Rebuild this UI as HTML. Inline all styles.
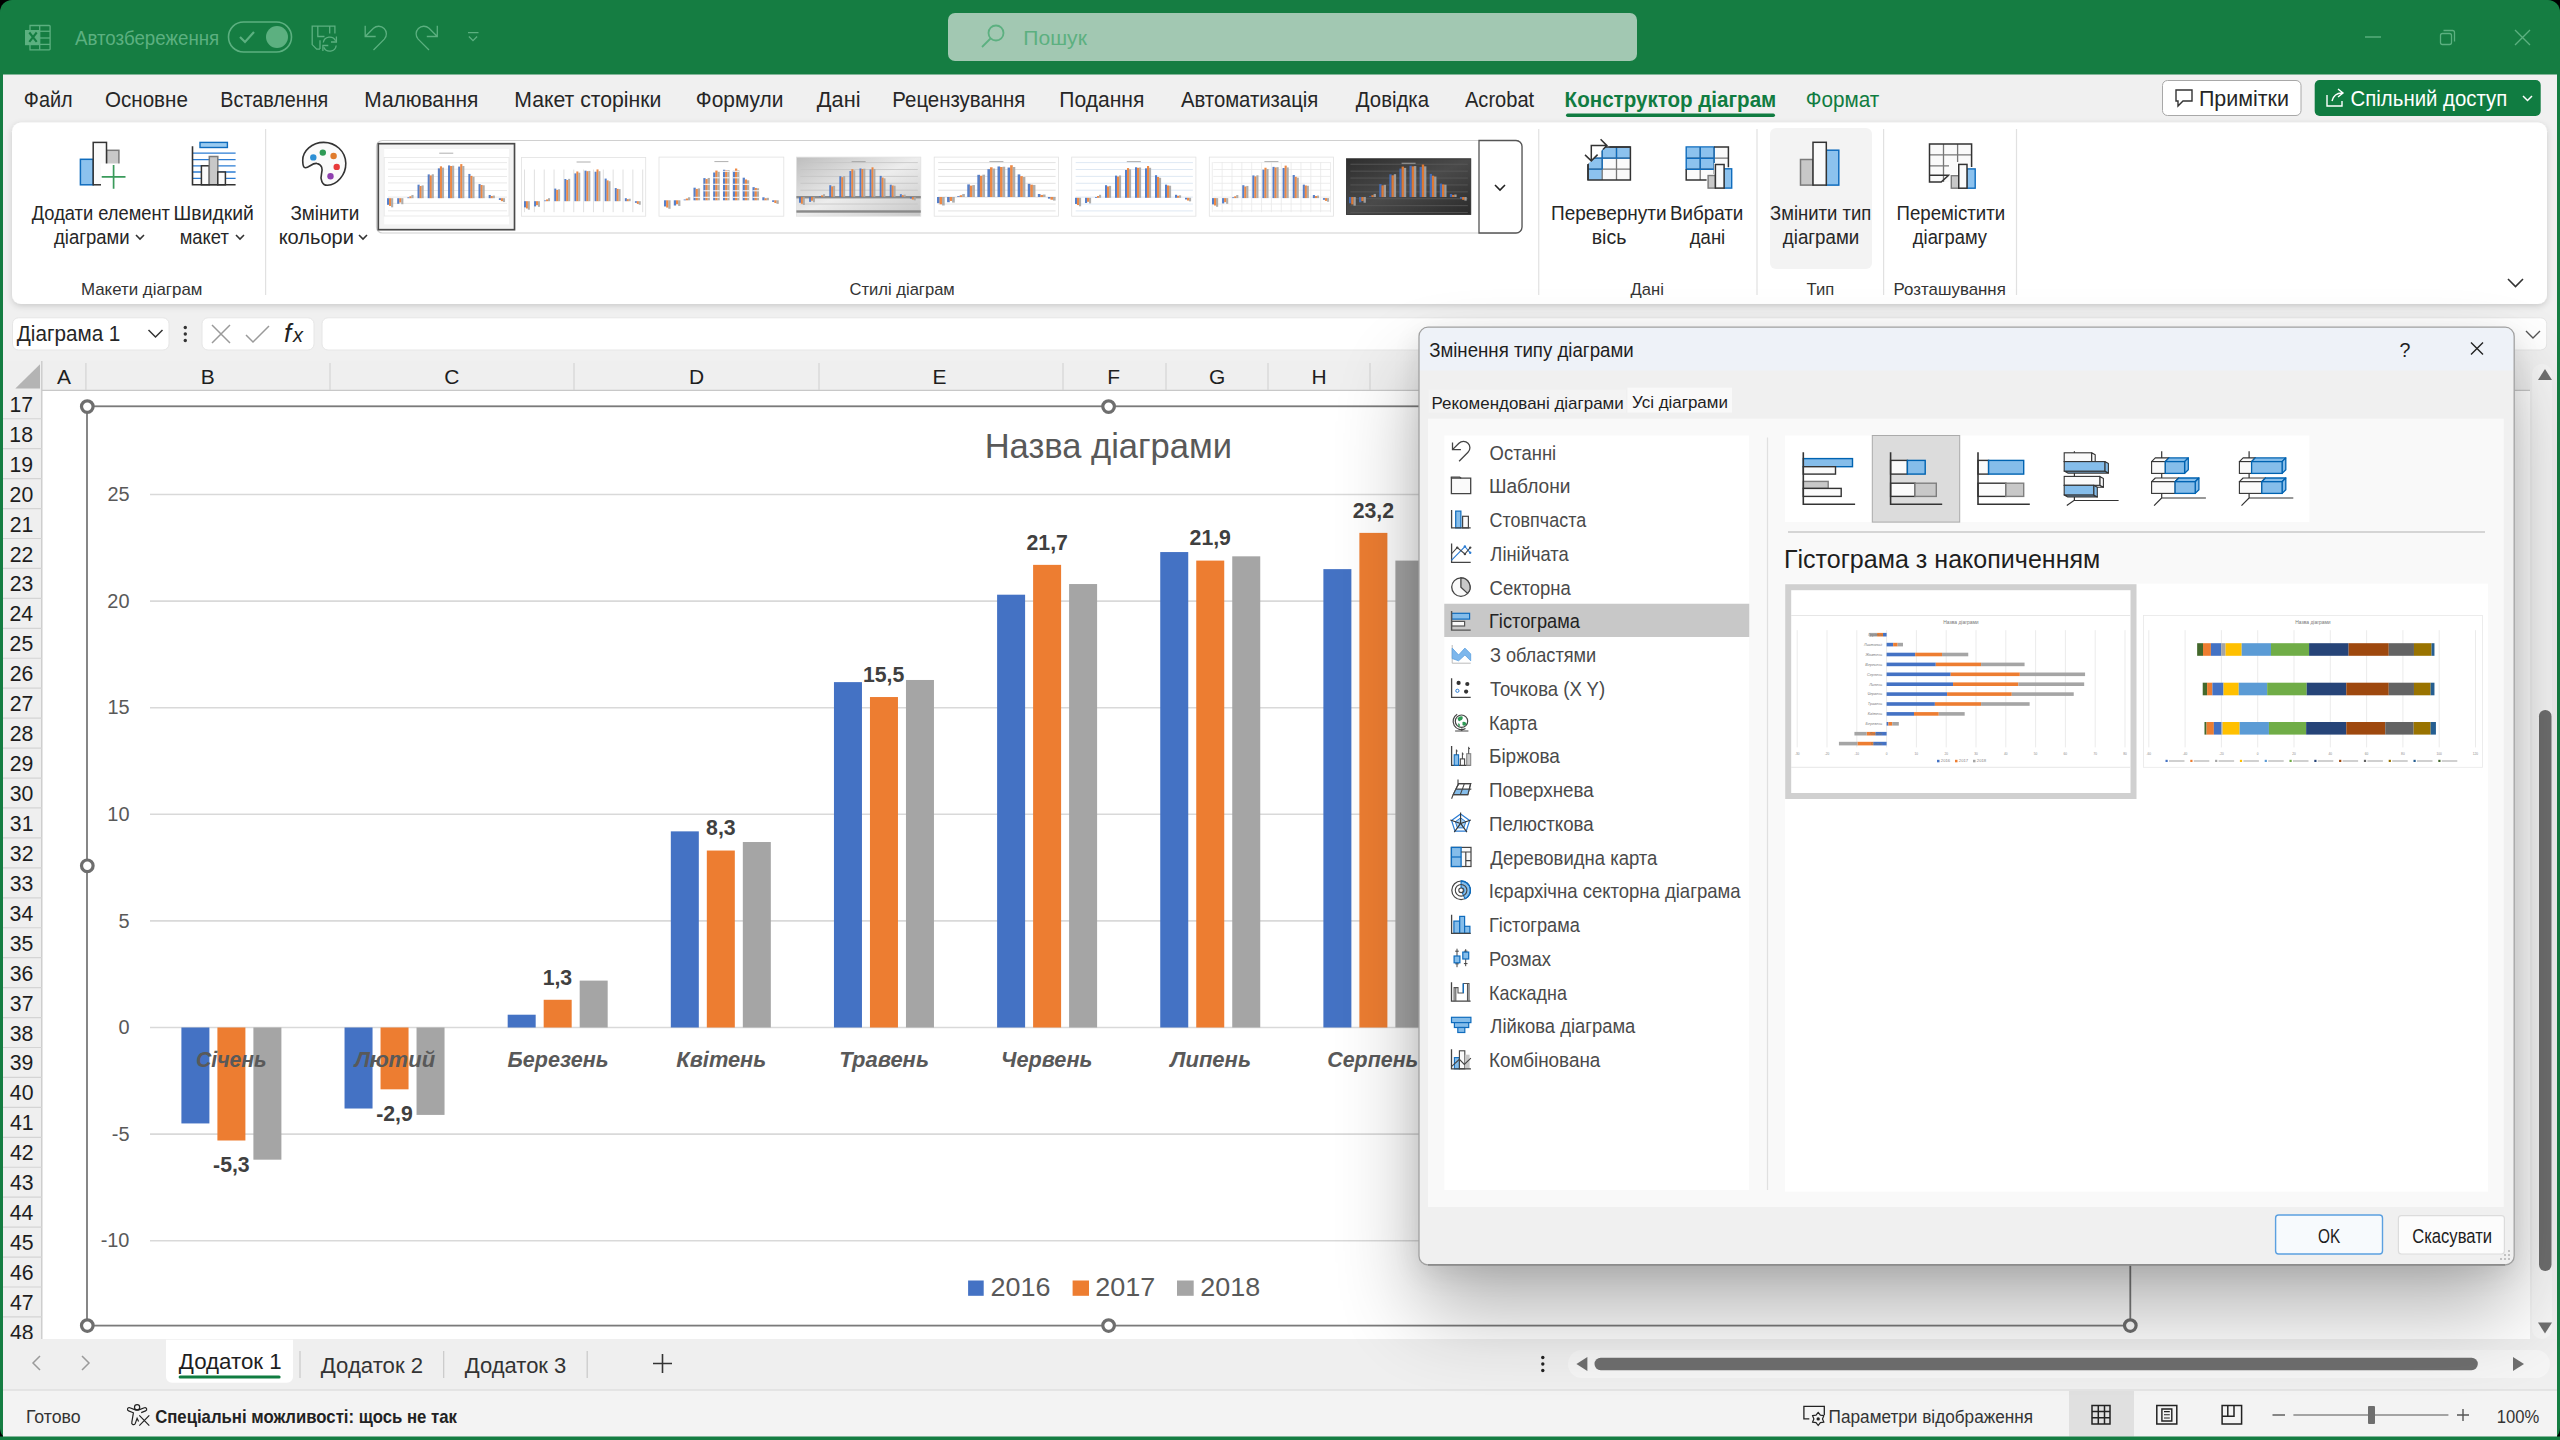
<!DOCTYPE html>
<html><head><meta charset="utf-8"><title>Excel</title><style>html,body{margin:0;padding:0;background:#000;overflow:hidden}svg{display:block}text{font-family:"Liberation Sans",sans-serif}</style></head><body><svg width="2560" height="1440" viewBox="0 0 2560 1440" font-family='"Liberation Sans", sans-serif'>
<defs>
<filter id="rshadow" x="-5%" y="-20%" width="110%" height="150%"><feDropShadow dx="0" dy="2" stdDeviation="3" flood-color="#000" flood-opacity="0.16"/></filter>
<filter id="dshadow" x="-20%" y="-20%" width="140%" height="150%"><feGaussianBlur in="SourceAlpha" stdDeviation="14" result="b1"/><feOffset in="b1" dy="8" result="o1"/><feGaussianBlur in="SourceAlpha" stdDeviation="42" result="b2"/><feOffset in="b2" dy="46" result="o2"/><feComponentTransfer in="o1" result="s1"><feFuncA type="linear" slope="0.10"/></feComponentTransfer><feComponentTransfer in="o2" result="s2"><feFuncA type="linear" slope="0.30"/></feComponentTransfer><feMerge><feMergeNode in="s2"/><feMergeNode in="s1"/><feMergeNode in="SourceGraphic"/></feMerge></filter>
<linearGradient id="g4" x1="0" y1="0" x2="1" y2="1"><stop offset="0" stop-color="#BDBDBD"/><stop offset="0.5" stop-color="#EDEDED"/><stop offset="1" stop-color="#C8C8C8"/></linearGradient>
<linearGradient id="g8" x1="0" y1="0" x2="1" y2="1"><stop offset="0" stop-color="#2E2E2E"/><stop offset="0.5" stop-color="#4A4A4A"/><stop offset="1" stop-color="#2A2A2A"/></linearGradient>
</defs>
<rect x="0.00" y="0.00" width="2560.00" height="1440.00" fill="#000" />
<rect x="0.00" y="0.00" width="2560.00" height="1440.00" fill="#157D42" rx="12" />
<path d="M30 25.5 h19.3 a0.8 0.8 0 0 1 0.8 0.8 v22.7 a0.8 0.8 0 0 1 -0.8 0.8 h-19.3 z" fill="none" stroke="#5CB080" stroke-width="1.3" />
<line x1="39.70" y1="31.25" x2="50.00" y2="31.25" stroke="#5CB080" stroke-width="1.3" />
<line x1="39.70" y1="38.00" x2="50.00" y2="38.00" stroke="#5CB080" stroke-width="1.3" />
<line x1="39.70" y1="44.40" x2="50.00" y2="44.40" stroke="#5CB080" stroke-width="1.3" />
<line x1="39.70" y1="25.50" x2="39.70" y2="49.80" stroke="#5CB080" stroke-width="1.3" />
<rect x="25.00" y="30.00" width="14.70" height="15.20" fill="#5CB080" />
<path d="M29.3 32.5 l7.4 9.4 M36.7 32.5 l-7.4 9.4" fill="none" stroke="#157D42" stroke-width="2.1" />
<text transform="translate(74.95,44.50) scale(0.9682,1)" font-size="19.35" fill="#5CB080" >Автозбереження</text>
<rect x="228.50" y="22.00" width="63.00" height="30.00" fill="none" rx="15" stroke="#5CB080" stroke-width="1.6" />
<path d="M240 37 l5 5 l9 -10" fill="none" stroke="#5CB080" stroke-width="2.2" />
<circle cx="277.00" cy="37.00" r="11.00" fill="#5CB080"/>
<path d="M320 49.1 h-3.3 l-4.5 -4.5 V26.1 H334.9 V33.6" fill="none" stroke="#5CB080" stroke-width="1.3" />
<path d="M317.8 26.1 V36.5 H324.5 M329.7 26.1 V33.6 M320 49.1 V40.2" fill="none" stroke="#5CB080" stroke-width="1.3" />
<path d="M323.3 42.5 A6.5 6.5 0 0 1 335.6 40.8 M336.2 45.5 A6.5 6.5 0 0 1 323.8 47.3" fill="none" stroke="#5CB080" stroke-width="1.3" />
<path d="M336.4 36.5 V42 H331" fill="none" stroke="#5CB080" stroke-width="1.3" />
<path d="M322.9 51 V45.5 H328.3" fill="none" stroke="#5CB080" stroke-width="1.3" />
<path d="M365.2 25.8 V36.5 H375.7 M365.2 36.5 L373.46 28.26 A7.7 7.7 0 0 1 384.34 39.14 L373.5 50" fill="none" stroke="#5CB080" stroke-width="1.3" />
<path d="M437.3 25.8 V36.5 H426.8 M437.3 36.5 L429.04 28.26 A7.7 7.7 0 0 0 418.16 39.14 L429 50" fill="none" stroke="#5CB080" stroke-width="1.3" />
<path d="M468 32.7 h10.5 M468.9 36.5 l4.1 4.1 l4.1 -4.1" fill="none" stroke="#5CB080" stroke-width="1.3" />
<rect x="948.00" y="13.00" width="689.00" height="48.00" fill="#A2C8B2" rx="7" />
<circle cx="996.00" cy="33.00" r="7.50" fill="none" stroke="#5CB080" stroke-width="1.8"/>
<line x1="990.50" y1="38.50" x2="982.00" y2="47.00" stroke="#5CB080" stroke-width="1.8" />
<text transform="translate(1023.31,45.00) scale(1.0356,1)" font-size="20.36" fill="#5CB080" >Пошук</text>
<line x1="2365.00" y1="37.00" x2="2381.00" y2="37.00" stroke="#5CB080" stroke-width="1.4" />
<rect x="2440.50" y="33.50" width="11.00" height="11.00" fill="none" rx="2" stroke="#5CB080" stroke-width="1.3" />
<path d="M2443.5 30.5 h9 a2 2 0 0 1 2 2 v9" fill="none" stroke="#5CB080" stroke-width="1.3" />
<path d="M2515 30 l15 15 M2530 30 l-15 15" fill="none" stroke="#5CB080" stroke-width="1.4" />
<rect x="3.00" y="74.50" width="2554.00" height="1362.50" fill="#F0F0F0" />
<text transform="translate(23.86,107.10) scale(0.9221,1)" font-size="21.53" fill="#262626" >Файл</text>
<text transform="translate(105.02,107.10) scale(0.9562,1)" font-size="21.53" fill="#262626" >Основне</text>
<text transform="translate(220.37,107.10) scale(0.9181,1)" font-size="21.53" fill="#262626" >Вставлення</text>
<text transform="translate(364.27,107.10) scale(0.9720,1)" font-size="21.53" fill="#262626" >Малювання</text>
<text transform="translate(514.25,107.10) scale(0.9855,1)" font-size="21.53" fill="#262626" >Макет сторінки</text>
<text transform="translate(695.80,107.10) scale(0.9713,1)" font-size="21.53" fill="#262626" >Формули</text>
<text transform="translate(816.84,107.10) scale(1.0096,1)" font-size="21.53" fill="#262626" >Дані</text>
<text transform="translate(892.32,107.10) scale(0.9484,1)" font-size="21.53" fill="#262626" >Рецензування</text>
<text transform="translate(1059.31,107.10) scale(0.9792,1)" font-size="21.53" fill="#262626" >Подання</text>
<text transform="translate(1180.95,107.10) scale(0.9433,1)" font-size="21.53" fill="#262626" >Автоматизація</text>
<text transform="translate(1355.85,107.10) scale(0.9446,1)" font-size="21.53" fill="#262626" >Довідка</text>
<text transform="translate(1464.95,107.10) scale(0.9331,1)" font-size="21.53" fill="#262626" >Acrobat</text>
<text transform="translate(1564.61,107.10) scale(0.9558,1)" font-size="21.53" font-weight="bold" fill="#107C41" >Конструктор діаграм</text>
<rect x="1566.00" y="113.50" width="209.00" height="3.50" fill="#107C41" rx="1.7" />
<text transform="translate(1805.81,107.10) scale(0.9618,1)" font-size="21.53" fill="#107C41" >Формат</text>
<rect x="2162.50" y="80.50" width="138.50" height="35.00" fill="#FFFFFF" rx="5" stroke="#A8A8A8" stroke-width="1" />
<path d="M2176 90 h16 v11 h-9 l-5 5 v-5 h-2 z" fill="none" stroke="#333" stroke-width="1.4" />
<text transform="translate(2198.88,106.25) scale(0.9840,1)" font-size="21.82" fill="#262626" >Примітки</text>
<rect x="2314.70" y="80.00" width="226.00" height="36.00" fill="#107C41" rx="5" />
<path d="M2327 95 v11 h15 v-5 M2332 101 q2 -8 10 -8 M2338 89 l5 4 l-5 4" fill="none" stroke="#fff" stroke-width="1.4" />
<text transform="translate(2350.58,106.25) scale(0.9348,1)" font-size="21.82" fill="#FFFFFF" >Спільний доступ</text>
<path d="M2523 96 l4.5 4.5 l4.5 -4.5" fill="none" stroke="#fff" stroke-width="1.5" />
<g filter="url(#rshadow)">
<rect x="12.00" y="122.50" width="2535.00" height="181.50" fill="#FFFFFF" rx="9" />
</g>
<rect x="80.40" y="159.30" width="12.80" height="25.50" fill="#8CC2EE" stroke="#0F6CBD" stroke-width="1.5" />
<rect x="106.50" y="150.30" width="12.40" height="34.50" fill="#C8C8C8" stroke="#7A7A7A" stroke-width="1.5" />
<rect x="93.20" y="142.40" width="13.30" height="42.40" fill="#FAFAFA" stroke="#333333" stroke-width="1.5" />
<rect x="101.00" y="163.50" width="25.50" height="26.50" fill="#FFFFFF" />
<path d="M113.6 165 V188.8 M101.7 176.9 H125.5" fill="none" stroke="#3A9A5B" stroke-width="1.7" />
<text transform="translate(31.76,219.60) scale(0.9326,1)" font-size="19.64" fill="#262626" >Додати елемент</text>
<text transform="translate(54.02,244.20) scale(0.9416,1)" font-size="19.64" fill="#262626" >діаграми</text>
<path d="M136 235 l4 4 l4 -4" fill="none" stroke="#333" stroke-width="1.6" />
<rect x="200.00" y="142.40" width="27.40" height="5.10" fill="#9ACBF0" stroke="#0F6CBD" stroke-width="1.4" />
<line x1="192.50" y1="153.10" x2="235.60" y2="153.10" stroke="#2B7CD3" stroke-width="1.3" />
<line x1="192.50" y1="159.60" x2="235.60" y2="159.60" stroke="#2B7CD3" stroke-width="1.3" />
<line x1="192.50" y1="165.80" x2="235.60" y2="165.80" stroke="#2B7CD3" stroke-width="1.3" />
<line x1="192.50" y1="172.00" x2="235.60" y2="172.00" stroke="#2B7CD3" stroke-width="1.3" />
<line x1="192.50" y1="178.30" x2="235.60" y2="178.30" stroke="#2B7CD3" stroke-width="1.3" />
<rect x="201.40" y="165.80" width="7.90" height="19.00" fill="#FAFAFA" stroke="#333333" stroke-width="1.5" />
<rect x="209.30" y="156.50" width="8.50" height="28.30" fill="#C8C8C8" stroke="#7A7A7A" stroke-width="1.5" />
<rect x="217.80" y="172.00" width="7.60" height="12.80" fill="#FAFAFA" stroke="#333333" stroke-width="1.5" />
<path d="M192.5 146.3 V184.8 H235.6" fill="none" stroke="#333333" stroke-width="1.6" />
<text transform="translate(173.60,219.60) scale(0.9860,1)" font-size="19.64" fill="#262626" >Швидкий</text>
<text transform="translate(179.71,244.20) scale(0.9377,1)" font-size="19.64" fill="#262626" >макет</text>
<path d="M236 235 l4 4 l4 -4" fill="none" stroke="#333" stroke-width="1.6" />
<line x1="265.60" y1="129.00" x2="265.60" y2="295.00" stroke="#E1E1E1" stroke-width="1.2" />
<path d="M305.6 167.8 C309 167.5 313 162.5 317 163.5 C322 164.5 323 169 321.5 174 C320 179 322 185.5 327.5 185.3 C337 185 346 175 345.8 163.3 C345.5 151 335.5 142.4 323.7 142.4 C312 142.4 302.5 151 302.7 160.5 C302.8 165 303.5 168 305.6 167.8 Z" fill="#FAFAFA" stroke="#333" stroke-width="1.6" />
<circle cx="313.30" cy="157.40" r="3.20" fill="#2D8FD5"/>
<circle cx="322.80" cy="152.60" r="3.20" fill="#2E9A55"/>
<circle cx="333.60" cy="156.00" r="3.20" fill="#E07B2C"/>
<circle cx="336.70" cy="166.90" r="3.20" fill="#E83A3A"/>
<circle cx="330.50" cy="176.30" r="3.20" fill="#8E3FAF"/>
<text transform="translate(290.38,219.60) scale(0.9639,1)" font-size="19.64" fill="#262626" >Змінити</text>
<text transform="translate(278.65,244.20) scale(1.0192,1)" font-size="19.64" fill="#262626" >кольори</text>
<path d="M359 235 l4 4 l4 -4" fill="none" stroke="#333" stroke-width="1.6" />
<text transform="translate(80.90,294.80) scale(1.0199,1)" font-size="16.58" fill="#333" >Макети діаграм</text>
<rect x="376.50" y="140.50" width="1145.50" height="92.50" fill="#FFFFFF" rx="6" stroke="#D0D0D0" stroke-width="1.2" />
<path d="M1479 140.5 h37 a6 6 0 0 1 6 6 v80.5 a6 6 0 0 1 -6 6 h-37 z" fill="#FFFFFF" stroke="#555" stroke-width="1.3" />
<path d="M1495 185 l5 5 l5 -5" fill="none" stroke="#222" stroke-width="1.6" />
<rect x="379.30" y="144.50" width="134.00" height="85.00" fill="#F4F4F4" />
<rect x="384.20" y="149.00" width="124.80" height="75.40" fill="#FFFFFF" />
<rect x="384.20" y="157.50" width="124.80" height="58.50" fill="none" stroke="#E6E6E6" stroke-width="0.8" />
<line x1="388.00" y1="162.60" x2="507.00" y2="162.60" stroke="#E4E4E4" stroke-width="0.8" />
<line x1="388.00" y1="169.20" x2="507.00" y2="169.20" stroke="#E4E4E4" stroke-width="0.8" />
<line x1="388.00" y1="176.50" x2="507.00" y2="176.50" stroke="#E4E4E4" stroke-width="0.8" />
<line x1="388.00" y1="182.90" x2="507.00" y2="182.90" stroke="#E4E4E4" stroke-width="0.8" />
<line x1="388.00" y1="190.50" x2="507.00" y2="190.50" stroke="#E4E4E4" stroke-width="0.8" />
<line x1="388.00" y1="197.10" x2="507.00" y2="197.10" stroke="#E4E4E4" stroke-width="0.8" />
<line x1="388.00" y1="203.40" x2="507.00" y2="203.40" stroke="#E4E4E4" stroke-width="0.8" />
<line x1="388.00" y1="210.80" x2="507.00" y2="210.80" stroke="#E4E4E4" stroke-width="0.8" />
<rect x="387.02" y="198.20" width="2.13" height="6.62" fill="#4472C4" opacity="0.9"/>
<rect x="389.05" y="198.20" width="2.13" height="7.79" fill="#ED7D31" opacity="0.9"/>
<rect x="391.08" y="198.20" width="2.13" height="9.11" fill="#A5A5A5" opacity="0.9"/>
<rect x="397.18" y="198.20" width="2.13" height="5.59" fill="#4472C4" opacity="0.9"/>
<rect x="399.22" y="198.20" width="2.13" height="4.26" fill="#ED7D31" opacity="0.9"/>
<rect x="401.25" y="198.20" width="2.13" height="6.03" fill="#A5A5A5" opacity="0.9"/>
<rect x="407.35" y="197.32" width="2.13" height="0.88" fill="#4472C4" opacity="0.9"/>
<rect x="409.38" y="196.29" width="2.13" height="1.91" fill="#ED7D31" opacity="0.9"/>
<rect x="411.42" y="194.97" width="2.13" height="3.23" fill="#A5A5A5" opacity="0.9"/>
<rect x="417.52" y="184.68" width="2.13" height="13.52" fill="#4472C4" opacity="0.9"/>
<rect x="419.55" y="186.00" width="2.13" height="12.20" fill="#ED7D31" opacity="0.9"/>
<rect x="421.58" y="185.41" width="2.13" height="12.79" fill="#A5A5A5" opacity="0.9"/>
<rect x="427.68" y="174.39" width="2.13" height="23.81" fill="#4472C4" opacity="0.9"/>
<rect x="429.72" y="175.41" width="2.13" height="22.79" fill="#ED7D31" opacity="0.9"/>
<rect x="431.75" y="174.24" width="2.13" height="23.96" fill="#A5A5A5" opacity="0.9"/>
<rect x="437.85" y="168.36" width="2.13" height="29.84" fill="#4472C4" opacity="0.9"/>
<rect x="439.88" y="166.30" width="2.13" height="31.90" fill="#ED7D31" opacity="0.9"/>
<rect x="441.92" y="167.62" width="2.13" height="30.58" fill="#A5A5A5" opacity="0.9"/>
<rect x="448.02" y="165.42" width="2.13" height="32.78" fill="#4472C4" opacity="0.9"/>
<rect x="450.05" y="166.01" width="2.13" height="32.19" fill="#ED7D31" opacity="0.9"/>
<rect x="452.08" y="165.71" width="2.13" height="32.49" fill="#A5A5A5" opacity="0.9"/>
<rect x="458.18" y="166.59" width="2.13" height="31.61" fill="#4472C4" opacity="0.9"/>
<rect x="460.22" y="164.10" width="2.13" height="34.10" fill="#ED7D31" opacity="0.9"/>
<rect x="462.25" y="166.01" width="2.13" height="32.19" fill="#A5A5A5" opacity="0.9"/>
<rect x="468.35" y="173.94" width="2.13" height="24.25" fill="#4472C4" opacity="0.9"/>
<rect x="470.38" y="175.86" width="2.13" height="22.34" fill="#ED7D31" opacity="0.9"/>
<rect x="472.42" y="176.74" width="2.13" height="21.46" fill="#A5A5A5" opacity="0.9"/>
<rect x="478.52" y="184.09" width="2.13" height="14.11" fill="#4472C4" opacity="0.9"/>
<rect x="480.55" y="184.97" width="2.13" height="13.23" fill="#ED7D31" opacity="0.9"/>
<rect x="482.58" y="185.26" width="2.13" height="12.94" fill="#A5A5A5" opacity="0.9"/>
<rect x="488.68" y="194.97" width="2.13" height="3.23" fill="#4472C4" opacity="0.9"/>
<rect x="490.72" y="195.99" width="2.13" height="2.21" fill="#ED7D31" opacity="0.9"/>
<rect x="492.75" y="195.55" width="2.13" height="2.65" fill="#A5A5A5" opacity="0.9"/>
<rect x="498.85" y="198.20" width="2.13" height="1.76" fill="#4472C4" opacity="0.9"/>
<rect x="500.88" y="198.20" width="2.13" height="2.94" fill="#ED7D31" opacity="0.9"/>
<rect x="502.92" y="198.20" width="2.13" height="3.82" fill="#A5A5A5" opacity="0.9"/>
<line x1="439.25" y1="153.20" x2="453.25" y2="153.20" stroke="#9A9A9A" stroke-width="0.8" />
<rect x="521.50" y="157.50" width="124.20" height="58.70" fill="#FFFFFF" stroke="#E2E2E2" stroke-width="0.8" />
<line x1="524.50" y1="169.50" x2="524.50" y2="212.20" stroke="#E0E0E0" stroke-width="1.0" />
<line x1="534.35" y1="169.50" x2="534.35" y2="212.20" stroke="#E0E0E0" stroke-width="1.0" />
<line x1="544.20" y1="169.50" x2="544.20" y2="212.20" stroke="#E0E0E0" stroke-width="1.0" />
<line x1="554.05" y1="169.50" x2="554.05" y2="212.20" stroke="#E0E0E0" stroke-width="1.0" />
<line x1="563.90" y1="169.50" x2="563.90" y2="212.20" stroke="#E0E0E0" stroke-width="1.0" />
<line x1="573.75" y1="169.50" x2="573.75" y2="212.20" stroke="#E0E0E0" stroke-width="1.0" />
<line x1="583.60" y1="169.50" x2="583.60" y2="212.20" stroke="#E0E0E0" stroke-width="1.0" />
<line x1="593.45" y1="169.50" x2="593.45" y2="212.20" stroke="#E0E0E0" stroke-width="1.0" />
<line x1="603.30" y1="169.50" x2="603.30" y2="212.20" stroke="#E0E0E0" stroke-width="1.0" />
<line x1="613.15" y1="169.50" x2="613.15" y2="212.20" stroke="#E0E0E0" stroke-width="1.0" />
<line x1="623.00" y1="169.50" x2="623.00" y2="212.20" stroke="#E0E0E0" stroke-width="1.0" />
<line x1="632.85" y1="169.50" x2="632.85" y2="212.20" stroke="#E0E0E0" stroke-width="1.0" />
<line x1="642.70" y1="169.50" x2="642.70" y2="212.20" stroke="#E0E0E0" stroke-width="1.0" />
<rect x="524.01" y="201.20" width="2.01" height="6.17" fill="#4472C4" opacity="0.9"/>
<rect x="525.92" y="201.20" width="2.01" height="7.26" fill="#ED7D31" opacity="0.9"/>
<rect x="527.84" y="201.20" width="2.01" height="8.49" fill="#A5A5A5" opacity="0.9"/>
<rect x="534.09" y="201.20" width="2.01" height="5.21" fill="#4472C4" opacity="0.9"/>
<rect x="536.01" y="201.20" width="2.01" height="3.97" fill="#ED7D31" opacity="0.9"/>
<rect x="537.92" y="201.20" width="2.01" height="5.62" fill="#A5A5A5" opacity="0.9"/>
<rect x="544.17" y="200.38" width="2.01" height="0.82" fill="#4472C4" opacity="0.9"/>
<rect x="546.09" y="199.42" width="2.01" height="1.78" fill="#ED7D31" opacity="0.9"/>
<rect x="548.01" y="198.19" width="2.01" height="3.01" fill="#A5A5A5" opacity="0.9"/>
<rect x="554.26" y="188.60" width="2.01" height="12.60" fill="#4472C4" opacity="0.9"/>
<rect x="556.17" y="189.83" width="2.01" height="11.37" fill="#ED7D31" opacity="0.9"/>
<rect x="558.09" y="189.28" width="2.01" height="11.92" fill="#A5A5A5" opacity="0.9"/>
<rect x="564.34" y="179.01" width="2.01" height="22.19" fill="#4472C4" opacity="0.9"/>
<rect x="566.26" y="179.96" width="2.01" height="21.24" fill="#ED7D31" opacity="0.9"/>
<rect x="568.17" y="178.87" width="2.01" height="22.33" fill="#A5A5A5" opacity="0.9"/>
<rect x="574.42" y="173.39" width="2.01" height="27.81" fill="#4472C4" opacity="0.9"/>
<rect x="576.34" y="171.47" width="2.01" height="29.73" fill="#ED7D31" opacity="0.9"/>
<rect x="578.26" y="172.70" width="2.01" height="28.50" fill="#A5A5A5" opacity="0.9"/>
<rect x="584.51" y="170.65" width="2.01" height="30.55" fill="#4472C4" opacity="0.9"/>
<rect x="586.42" y="171.20" width="2.01" height="30.00" fill="#ED7D31" opacity="0.9"/>
<rect x="588.34" y="170.92" width="2.01" height="30.28" fill="#A5A5A5" opacity="0.9"/>
<rect x="594.59" y="171.74" width="2.01" height="29.46" fill="#4472C4" opacity="0.9"/>
<rect x="596.51" y="169.42" width="2.01" height="31.78" fill="#ED7D31" opacity="0.9"/>
<rect x="598.42" y="171.20" width="2.01" height="30.00" fill="#A5A5A5" opacity="0.9"/>
<rect x="604.67" y="178.59" width="2.01" height="22.61" fill="#4472C4" opacity="0.9"/>
<rect x="606.59" y="180.38" width="2.01" height="20.82" fill="#ED7D31" opacity="0.9"/>
<rect x="608.51" y="181.20" width="2.01" height="20.00" fill="#A5A5A5" opacity="0.9"/>
<rect x="614.76" y="188.05" width="2.01" height="13.15" fill="#4472C4" opacity="0.9"/>
<rect x="616.67" y="188.87" width="2.01" height="12.33" fill="#ED7D31" opacity="0.9"/>
<rect x="618.59" y="189.14" width="2.01" height="12.06" fill="#A5A5A5" opacity="0.9"/>
<rect x="624.84" y="198.19" width="2.01" height="3.01" fill="#4472C4" opacity="0.9"/>
<rect x="626.76" y="199.14" width="2.01" height="2.06" fill="#ED7D31" opacity="0.9"/>
<rect x="628.67" y="198.73" width="2.01" height="2.47" fill="#A5A5A5" opacity="0.9"/>
<rect x="634.92" y="201.20" width="2.01" height="1.64" fill="#4472C4" opacity="0.9"/>
<rect x="636.84" y="201.20" width="2.01" height="2.74" fill="#ED7D31" opacity="0.9"/>
<rect x="638.76" y="201.20" width="2.01" height="3.56" fill="#A5A5A5" opacity="0.9"/>
<line x1="576.60" y1="162.00" x2="590.60" y2="162.00" stroke="#9A9A9A" stroke-width="0.8" />
<rect x="659.00" y="157.10" width="124.80" height="59.10" fill="#FFFFFF" stroke="#E2E2E2" stroke-width="0.8" />
<rect x="663.98" y="200.30" width="2.27" height="6.17" fill="#4472C4" opacity="0.9"/>
<rect x="666.15" y="200.30" width="2.27" height="7.26" fill="#ED7D31" opacity="0.9"/>
<rect x="668.31" y="200.30" width="2.27" height="8.49" fill="#A5A5A5" opacity="0.9"/>
<rect x="673.82" y="200.30" width="2.27" height="5.21" fill="#4472C4" opacity="0.9"/>
<rect x="675.98" y="200.30" width="2.27" height="3.97" fill="#ED7D31" opacity="0.9"/>
<rect x="678.14" y="200.30" width="2.27" height="5.62" fill="#A5A5A5" opacity="0.9"/>
<rect x="683.65" y="199.48" width="2.27" height="0.82" fill="#4472C4" opacity="0.9"/>
<rect x="685.81" y="198.52" width="2.27" height="1.78" fill="#ED7D31" opacity="0.9"/>
<rect x="687.98" y="197.29" width="2.27" height="3.01" fill="#A5A5A5" opacity="0.9"/>
<rect x="693.48" y="187.70" width="2.27" height="12.60" fill="#4472C4" opacity="0.9"/>
<rect x="695.65" y="188.93" width="2.27" height="11.37" fill="#ED7D31" opacity="0.9"/>
<rect x="697.81" y="188.38" width="2.27" height="11.92" fill="#A5A5A5" opacity="0.9"/>
<rect x="703.32" y="178.11" width="2.27" height="22.19" fill="#4472C4" opacity="0.9"/>
<rect x="705.48" y="179.06" width="2.27" height="21.24" fill="#ED7D31" opacity="0.9"/>
<rect x="707.64" y="177.97" width="2.27" height="22.33" fill="#A5A5A5" opacity="0.9"/>
<rect x="713.15" y="172.49" width="2.27" height="27.81" fill="#4472C4" opacity="0.9"/>
<rect x="715.31" y="170.57" width="2.27" height="29.73" fill="#ED7D31" opacity="0.9"/>
<rect x="717.48" y="171.80" width="2.27" height="28.50" fill="#A5A5A5" opacity="0.9"/>
<rect x="722.98" y="169.75" width="2.27" height="30.55" fill="#4472C4" opacity="0.9"/>
<rect x="725.15" y="170.30" width="2.27" height="30.00" fill="#ED7D31" opacity="0.9"/>
<rect x="727.31" y="170.02" width="2.27" height="30.28" fill="#A5A5A5" opacity="0.9"/>
<rect x="732.82" y="170.84" width="2.27" height="29.46" fill="#4472C4" opacity="0.9"/>
<rect x="734.98" y="168.52" width="2.27" height="31.78" fill="#ED7D31" opacity="0.9"/>
<rect x="737.14" y="170.30" width="2.27" height="30.00" fill="#A5A5A5" opacity="0.9"/>
<rect x="742.65" y="177.70" width="2.27" height="22.61" fill="#4472C4" opacity="0.9"/>
<rect x="744.81" y="179.48" width="2.27" height="20.82" fill="#ED7D31" opacity="0.9"/>
<rect x="746.98" y="180.30" width="2.27" height="20.00" fill="#A5A5A5" opacity="0.9"/>
<rect x="752.48" y="187.15" width="2.27" height="13.15" fill="#4472C4" opacity="0.9"/>
<rect x="754.65" y="187.97" width="2.27" height="12.33" fill="#ED7D31" opacity="0.9"/>
<rect x="756.81" y="188.24" width="2.27" height="12.06" fill="#A5A5A5" opacity="0.9"/>
<rect x="762.32" y="197.29" width="2.27" height="3.01" fill="#4472C4" opacity="0.9"/>
<rect x="764.48" y="198.25" width="2.27" height="2.06" fill="#ED7D31" opacity="0.9"/>
<rect x="766.64" y="197.83" width="2.27" height="2.47" fill="#A5A5A5" opacity="0.9"/>
<rect x="772.15" y="200.30" width="2.27" height="1.64" fill="#4472C4" opacity="0.9"/>
<rect x="774.31" y="200.30" width="2.27" height="2.74" fill="#ED7D31" opacity="0.9"/>
<rect x="776.48" y="200.30" width="2.27" height="3.56" fill="#A5A5A5" opacity="0.9"/>
<line x1="693.48" y1="197.30" x2="699.97" y2="197.30" stroke="#FFFFFF" stroke-width="1.0" />
<line x1="703.32" y1="197.30" x2="709.81" y2="197.30" stroke="#FFFFFF" stroke-width="1.0" />
<line x1="703.32" y1="190.80" x2="709.81" y2="190.80" stroke="#FFFFFF" stroke-width="1.0" />
<line x1="703.32" y1="184.30" x2="709.81" y2="184.30" stroke="#FFFFFF" stroke-width="1.0" />
<line x1="713.15" y1="197.30" x2="719.64" y2="197.30" stroke="#FFFFFF" stroke-width="1.0" />
<line x1="713.15" y1="190.80" x2="719.64" y2="190.80" stroke="#FFFFFF" stroke-width="1.0" />
<line x1="713.15" y1="184.30" x2="719.64" y2="184.30" stroke="#FFFFFF" stroke-width="1.0" />
<line x1="713.15" y1="177.80" x2="719.64" y2="177.80" stroke="#FFFFFF" stroke-width="1.0" />
<line x1="722.98" y1="197.30" x2="729.47" y2="197.30" stroke="#FFFFFF" stroke-width="1.0" />
<line x1="722.98" y1="190.80" x2="729.47" y2="190.80" stroke="#FFFFFF" stroke-width="1.0" />
<line x1="722.98" y1="184.30" x2="729.47" y2="184.30" stroke="#FFFFFF" stroke-width="1.0" />
<line x1="722.98" y1="177.80" x2="729.47" y2="177.80" stroke="#FFFFFF" stroke-width="1.0" />
<line x1="722.98" y1="171.30" x2="729.47" y2="171.30" stroke="#FFFFFF" stroke-width="1.0" />
<line x1="732.82" y1="197.30" x2="739.31" y2="197.30" stroke="#FFFFFF" stroke-width="1.0" />
<line x1="732.82" y1="190.80" x2="739.31" y2="190.80" stroke="#FFFFFF" stroke-width="1.0" />
<line x1="732.82" y1="184.30" x2="739.31" y2="184.30" stroke="#FFFFFF" stroke-width="1.0" />
<line x1="732.82" y1="177.80" x2="739.31" y2="177.80" stroke="#FFFFFF" stroke-width="1.0" />
<line x1="732.82" y1="171.30" x2="739.31" y2="171.30" stroke="#FFFFFF" stroke-width="1.0" />
<line x1="742.65" y1="197.30" x2="749.14" y2="197.30" stroke="#FFFFFF" stroke-width="1.0" />
<line x1="742.65" y1="190.80" x2="749.14" y2="190.80" stroke="#FFFFFF" stroke-width="1.0" />
<line x1="742.65" y1="184.30" x2="749.14" y2="184.30" stroke="#FFFFFF" stroke-width="1.0" />
<line x1="752.48" y1="197.30" x2="758.97" y2="197.30" stroke="#FFFFFF" stroke-width="1.0" />
<line x1="752.48" y1="190.80" x2="758.97" y2="190.80" stroke="#FFFFFF" stroke-width="1.0" />
<line x1="714.40" y1="161.60" x2="728.40" y2="161.60" stroke="#9A9A9A" stroke-width="0.8" />
<rect x="796.40" y="157.10" width="124.40" height="59.10" fill="url(#g4)" stroke="#E2E2E2" stroke-width="0.8" />
<line x1="800.40" y1="162.60" x2="917.80" y2="162.60" stroke="#C4C4C4" stroke-width="0.8" />
<line x1="800.40" y1="169.50" x2="917.80" y2="169.50" stroke="#C4C4C4" stroke-width="0.8" />
<line x1="800.40" y1="176.40" x2="917.80" y2="176.40" stroke="#C4C4C4" stroke-width="0.8" />
<line x1="800.40" y1="183.30" x2="917.80" y2="183.30" stroke="#C4C4C4" stroke-width="0.8" />
<line x1="800.40" y1="190.20" x2="917.80" y2="190.20" stroke="#C4C4C4" stroke-width="0.8" />
<line x1="800.40" y1="197.10" x2="917.80" y2="197.10" stroke="#C4C4C4" stroke-width="0.8" />
<line x1="800.40" y1="204.00" x2="917.80" y2="204.00" stroke="#C4C4C4" stroke-width="0.8" />
<line x1="800.40" y1="210.90" x2="917.80" y2="210.90" stroke="#C4C4C4" stroke-width="0.8" />
<rect x="796.40" y="196.00" width="124.40" height="2.40" fill="#8A8A8A" />
<rect x="796.40" y="210.30" width="124.40" height="2.40" fill="#8A8A8A" />
<rect x="799.01" y="197.00" width="2.01" height="5.76" fill="#4472C4" opacity="0.9"/>
<rect x="800.92" y="197.00" width="2.01" height="6.78" fill="#ED7D31" opacity="0.9"/>
<rect x="802.84" y="197.00" width="2.01" height="7.94" fill="#A5A5A5" opacity="0.9"/>
<rect x="809.09" y="197.00" width="2.01" height="4.86" fill="#4472C4" opacity="0.9"/>
<rect x="811.01" y="197.00" width="2.01" height="3.71" fill="#ED7D31" opacity="0.9"/>
<rect x="812.92" y="197.00" width="2.01" height="5.25" fill="#A5A5A5" opacity="0.9"/>
<rect x="819.17" y="196.23" width="2.01" height="0.77" fill="#4472C4" opacity="0.9"/>
<rect x="821.09" y="195.34" width="2.01" height="1.66" fill="#ED7D31" opacity="0.9"/>
<rect x="823.01" y="194.18" width="2.01" height="2.82" fill="#A5A5A5" opacity="0.9"/>
<rect x="829.26" y="185.22" width="2.01" height="11.78" fill="#4472C4" opacity="0.9"/>
<rect x="831.17" y="186.38" width="2.01" height="10.62" fill="#ED7D31" opacity="0.9"/>
<rect x="833.09" y="185.86" width="2.01" height="11.14" fill="#A5A5A5" opacity="0.9"/>
<rect x="839.34" y="176.26" width="2.01" height="20.74" fill="#4472C4" opacity="0.9"/>
<rect x="841.26" y="177.16" width="2.01" height="19.84" fill="#ED7D31" opacity="0.9"/>
<rect x="843.17" y="176.14" width="2.01" height="20.86" fill="#A5A5A5" opacity="0.9"/>
<rect x="849.42" y="171.02" width="2.01" height="25.98" fill="#4472C4" opacity="0.9"/>
<rect x="851.34" y="169.22" width="2.01" height="27.78" fill="#ED7D31" opacity="0.9"/>
<rect x="853.26" y="170.38" width="2.01" height="26.62" fill="#A5A5A5" opacity="0.9"/>
<rect x="859.51" y="168.46" width="2.01" height="28.54" fill="#4472C4" opacity="0.9"/>
<rect x="861.42" y="168.97" width="2.01" height="28.03" fill="#ED7D31" opacity="0.9"/>
<rect x="863.34" y="168.71" width="2.01" height="28.29" fill="#A5A5A5" opacity="0.9"/>
<rect x="869.59" y="169.48" width="2.01" height="27.52" fill="#4472C4" opacity="0.9"/>
<rect x="871.51" y="167.30" width="2.01" height="29.70" fill="#ED7D31" opacity="0.9"/>
<rect x="873.42" y="168.97" width="2.01" height="28.03" fill="#A5A5A5" opacity="0.9"/>
<rect x="879.67" y="175.88" width="2.01" height="21.12" fill="#4472C4" opacity="0.9"/>
<rect x="881.59" y="177.54" width="2.01" height="19.46" fill="#ED7D31" opacity="0.9"/>
<rect x="883.51" y="178.31" width="2.01" height="18.69" fill="#A5A5A5" opacity="0.9"/>
<rect x="889.76" y="184.71" width="2.01" height="12.29" fill="#4472C4" opacity="0.9"/>
<rect x="891.67" y="185.48" width="2.01" height="11.52" fill="#ED7D31" opacity="0.9"/>
<rect x="893.59" y="185.74" width="2.01" height="11.26" fill="#A5A5A5" opacity="0.9"/>
<rect x="899.84" y="194.18" width="2.01" height="2.82" fill="#4472C4" opacity="0.9"/>
<rect x="901.76" y="195.08" width="2.01" height="1.92" fill="#ED7D31" opacity="0.9"/>
<rect x="903.67" y="194.70" width="2.01" height="2.30" fill="#A5A5A5" opacity="0.9"/>
<rect x="909.92" y="197.00" width="2.01" height="1.54" fill="#4472C4" opacity="0.9"/>
<rect x="911.84" y="197.00" width="2.01" height="2.56" fill="#ED7D31" opacity="0.9"/>
<rect x="913.76" y="197.00" width="2.01" height="3.33" fill="#A5A5A5" opacity="0.9"/>
<line x1="851.60" y1="161.60" x2="865.60" y2="161.60" stroke="#9A9A9A" stroke-width="0.8" />
<rect x="934.20" y="157.10" width="124.40" height="59.10" fill="#FFFFFF" stroke="#E2E2E2" stroke-width="0.8" />
<line x1="938.20" y1="162.60" x2="1055.60" y2="162.60" stroke="#DADADA" stroke-width="0.8" />
<line x1="938.20" y1="169.50" x2="1055.60" y2="169.50" stroke="#DADADA" stroke-width="0.8" />
<line x1="938.20" y1="176.40" x2="1055.60" y2="176.40" stroke="#DADADA" stroke-width="0.8" />
<line x1="938.20" y1="183.30" x2="1055.60" y2="183.30" stroke="#DADADA" stroke-width="0.8" />
<line x1="938.20" y1="190.20" x2="1055.60" y2="190.20" stroke="#DADADA" stroke-width="0.8" />
<line x1="938.20" y1="197.10" x2="1055.60" y2="197.10" stroke="#DADADA" stroke-width="0.8" />
<line x1="938.20" y1="204.00" x2="1055.60" y2="204.00" stroke="#DADADA" stroke-width="0.8" />
<line x1="938.20" y1="210.90" x2="1055.60" y2="210.90" stroke="#DADADA" stroke-width="0.8" />
<rect x="937.01" y="197.00" width="2.65" height="6.17" fill="#4472C4" opacity="0.9"/>
<rect x="939.53" y="197.00" width="2.65" height="7.26" fill="#ED7D31" opacity="0.9"/>
<rect x="942.05" y="197.00" width="2.65" height="8.49" fill="#A5A5A5" opacity="0.9"/>
<rect x="947.09" y="197.00" width="2.65" height="5.21" fill="#4472C4" opacity="0.9"/>
<rect x="949.61" y="197.00" width="2.65" height="3.97" fill="#ED7D31" opacity="0.9"/>
<rect x="952.13" y="197.00" width="2.65" height="5.62" fill="#A5A5A5" opacity="0.9"/>
<rect x="957.17" y="196.18" width="2.65" height="0.82" fill="#4472C4" opacity="0.9"/>
<rect x="959.70" y="195.22" width="2.65" height="1.78" fill="#ED7D31" opacity="0.9"/>
<rect x="962.22" y="193.99" width="2.65" height="3.01" fill="#A5A5A5" opacity="0.9"/>
<rect x="967.26" y="184.40" width="2.65" height="12.60" fill="#4472C4" opacity="0.9"/>
<rect x="969.78" y="185.63" width="2.65" height="11.37" fill="#ED7D31" opacity="0.9"/>
<rect x="972.30" y="185.08" width="2.65" height="11.92" fill="#A5A5A5" opacity="0.9"/>
<rect x="977.34" y="174.81" width="2.65" height="22.19" fill="#4472C4" opacity="0.9"/>
<rect x="979.86" y="175.76" width="2.65" height="21.24" fill="#ED7D31" opacity="0.9"/>
<rect x="982.38" y="174.67" width="2.65" height="22.33" fill="#A5A5A5" opacity="0.9"/>
<rect x="987.42" y="169.19" width="2.65" height="27.81" fill="#4472C4" opacity="0.9"/>
<rect x="989.95" y="167.27" width="2.65" height="29.73" fill="#ED7D31" opacity="0.9"/>
<rect x="992.47" y="168.50" width="2.65" height="28.50" fill="#A5A5A5" opacity="0.9"/>
<rect x="997.51" y="166.45" width="2.65" height="30.55" fill="#4472C4" opacity="0.9"/>
<rect x="1000.03" y="167.00" width="2.65" height="30.00" fill="#ED7D31" opacity="0.9"/>
<rect x="1002.55" y="166.72" width="2.65" height="30.28" fill="#A5A5A5" opacity="0.9"/>
<rect x="1007.59" y="167.54" width="2.65" height="29.46" fill="#4472C4" opacity="0.9"/>
<rect x="1010.11" y="165.22" width="2.65" height="31.78" fill="#ED7D31" opacity="0.9"/>
<rect x="1012.63" y="167.00" width="2.65" height="30.00" fill="#A5A5A5" opacity="0.9"/>
<rect x="1017.67" y="174.40" width="2.65" height="22.61" fill="#4472C4" opacity="0.9"/>
<rect x="1020.20" y="176.18" width="2.65" height="20.82" fill="#ED7D31" opacity="0.9"/>
<rect x="1022.72" y="177.00" width="2.65" height="20.00" fill="#A5A5A5" opacity="0.9"/>
<rect x="1027.76" y="183.85" width="2.65" height="13.15" fill="#4472C4" opacity="0.9"/>
<rect x="1030.28" y="184.67" width="2.65" height="12.33" fill="#ED7D31" opacity="0.9"/>
<rect x="1032.80" y="184.94" width="2.65" height="12.06" fill="#A5A5A5" opacity="0.9"/>
<rect x="1037.84" y="193.99" width="2.65" height="3.01" fill="#4472C4" opacity="0.9"/>
<rect x="1040.36" y="194.94" width="2.65" height="2.06" fill="#ED7D31" opacity="0.9"/>
<rect x="1042.88" y="194.53" width="2.65" height="2.47" fill="#A5A5A5" opacity="0.9"/>
<rect x="1047.93" y="197.00" width="2.65" height="1.64" fill="#4472C4" opacity="0.9"/>
<rect x="1050.45" y="197.00" width="2.65" height="2.74" fill="#ED7D31" opacity="0.9"/>
<rect x="1052.97" y="197.00" width="2.65" height="3.56" fill="#A5A5A5" opacity="0.9"/>
<line x1="989.40" y1="161.60" x2="1003.40" y2="161.60" stroke="#9A9A9A" stroke-width="0.8" />
<rect x="1071.70" y="157.10" width="124.20" height="59.10" fill="#FFFFFF" stroke="#E2E2E2" stroke-width="0.8" />
<line x1="1075.70" y1="162.60" x2="1192.90" y2="162.60" stroke="#D6E2F0" stroke-width="0.8" />
<line x1="1075.70" y1="169.50" x2="1192.90" y2="169.50" stroke="#D6E2F0" stroke-width="0.8" />
<line x1="1075.70" y1="176.40" x2="1192.90" y2="176.40" stroke="#D6E2F0" stroke-width="0.8" />
<line x1="1075.70" y1="183.30" x2="1192.90" y2="183.30" stroke="#D6E2F0" stroke-width="0.8" />
<line x1="1075.70" y1="190.20" x2="1192.90" y2="190.20" stroke="#D6E2F0" stroke-width="0.8" />
<line x1="1075.70" y1="197.10" x2="1192.90" y2="197.10" stroke="#D6E2F0" stroke-width="0.8" />
<line x1="1075.70" y1="204.00" x2="1192.90" y2="204.00" stroke="#D6E2F0" stroke-width="0.8" />
<line x1="1075.70" y1="210.90" x2="1192.90" y2="210.90" stroke="#D6E2F0" stroke-width="0.8" />
<rect x="1075.00" y="197.80" width="2.10" height="6.17" fill="#4472C4" opacity="0.9"/>
<rect x="1077.00" y="197.80" width="2.10" height="7.26" fill="#ED7D31" opacity="0.9"/>
<rect x="1079.00" y="197.80" width="2.10" height="8.49" fill="#A5A5A5" opacity="0.9"/>
<rect x="1085.00" y="197.80" width="2.10" height="5.21" fill="#4472C4" opacity="0.9"/>
<rect x="1087.00" y="197.80" width="2.10" height="3.97" fill="#ED7D31" opacity="0.9"/>
<rect x="1089.00" y="197.80" width="2.10" height="5.62" fill="#A5A5A5" opacity="0.9"/>
<rect x="1095.00" y="196.98" width="2.10" height="0.82" fill="#4472C4" opacity="0.9"/>
<rect x="1097.00" y="196.02" width="2.10" height="1.78" fill="#ED7D31" opacity="0.9"/>
<rect x="1099.00" y="194.79" width="2.10" height="3.01" fill="#A5A5A5" opacity="0.9"/>
<rect x="1105.00" y="185.20" width="2.10" height="12.60" fill="#4472C4" opacity="0.9"/>
<rect x="1107.00" y="186.43" width="2.10" height="11.37" fill="#ED7D31" opacity="0.9"/>
<rect x="1109.00" y="185.88" width="2.10" height="11.92" fill="#A5A5A5" opacity="0.9"/>
<rect x="1115.00" y="175.61" width="2.10" height="22.19" fill="#4472C4" opacity="0.9"/>
<rect x="1117.00" y="176.56" width="2.10" height="21.24" fill="#ED7D31" opacity="0.9"/>
<rect x="1119.00" y="175.47" width="2.10" height="22.33" fill="#A5A5A5" opacity="0.9"/>
<rect x="1125.00" y="169.99" width="2.10" height="27.81" fill="#4472C4" opacity="0.9"/>
<rect x="1127.00" y="168.07" width="2.10" height="29.73" fill="#ED7D31" opacity="0.9"/>
<rect x="1129.00" y="169.30" width="2.10" height="28.50" fill="#A5A5A5" opacity="0.9"/>
<rect x="1135.00" y="167.25" width="2.10" height="30.55" fill="#4472C4" opacity="0.9"/>
<rect x="1137.00" y="167.80" width="2.10" height="30.00" fill="#ED7D31" opacity="0.9"/>
<rect x="1139.00" y="167.52" width="2.10" height="30.28" fill="#A5A5A5" opacity="0.9"/>
<rect x="1145.00" y="168.34" width="2.10" height="29.46" fill="#4472C4" opacity="0.9"/>
<rect x="1147.00" y="166.02" width="2.10" height="31.78" fill="#ED7D31" opacity="0.9"/>
<rect x="1149.00" y="167.80" width="2.10" height="30.00" fill="#A5A5A5" opacity="0.9"/>
<rect x="1155.00" y="175.20" width="2.10" height="22.61" fill="#4472C4" opacity="0.9"/>
<rect x="1157.00" y="176.98" width="2.10" height="20.82" fill="#ED7D31" opacity="0.9"/>
<rect x="1159.00" y="177.80" width="2.10" height="20.00" fill="#A5A5A5" opacity="0.9"/>
<rect x="1165.00" y="184.65" width="2.10" height="13.15" fill="#4472C4" opacity="0.9"/>
<rect x="1167.00" y="185.47" width="2.10" height="12.33" fill="#ED7D31" opacity="0.9"/>
<rect x="1169.00" y="185.74" width="2.10" height="12.06" fill="#A5A5A5" opacity="0.9"/>
<rect x="1175.00" y="194.79" width="2.10" height="3.01" fill="#4472C4" opacity="0.9"/>
<rect x="1177.00" y="195.75" width="2.10" height="2.06" fill="#ED7D31" opacity="0.9"/>
<rect x="1179.00" y="195.33" width="2.10" height="2.47" fill="#A5A5A5" opacity="0.9"/>
<rect x="1185.00" y="197.80" width="2.10" height="1.64" fill="#4472C4" opacity="0.9"/>
<rect x="1187.00" y="197.80" width="2.10" height="2.74" fill="#ED7D31" opacity="0.9"/>
<rect x="1189.00" y="197.80" width="2.10" height="3.56" fill="#A5A5A5" opacity="0.9"/>
<line x1="1126.80" y1="161.60" x2="1140.80" y2="161.60" stroke="#9A9A9A" stroke-width="0.8" />
<rect x="1209.30" y="157.10" width="124.20" height="59.10" fill="#FFFFFF" stroke="#E2E2E2" stroke-width="0.8" />
<line x1="1213.30" y1="162.60" x2="1330.50" y2="162.60" stroke="#E8E8E8" stroke-width="0.8" />
<line x1="1213.30" y1="169.50" x2="1330.50" y2="169.50" stroke="#E8E8E8" stroke-width="0.8" />
<line x1="1213.30" y1="176.40" x2="1330.50" y2="176.40" stroke="#E8E8E8" stroke-width="0.8" />
<line x1="1213.30" y1="183.30" x2="1330.50" y2="183.30" stroke="#E8E8E8" stroke-width="0.8" />
<line x1="1213.30" y1="190.20" x2="1330.50" y2="190.20" stroke="#E8E8E8" stroke-width="0.8" />
<line x1="1213.30" y1="197.10" x2="1330.50" y2="197.10" stroke="#E8E8E8" stroke-width="0.8" />
<line x1="1213.30" y1="204.00" x2="1330.50" y2="204.00" stroke="#E8E8E8" stroke-width="0.8" />
<line x1="1213.30" y1="210.90" x2="1330.50" y2="210.90" stroke="#E8E8E8" stroke-width="0.8" />
<line x1="1212.30" y1="162.10" x2="1212.30" y2="212.20" stroke="#E8E8E8" stroke-width="0.8" />
<line x1="1222.15" y1="162.10" x2="1222.15" y2="212.20" stroke="#E8E8E8" stroke-width="0.8" />
<line x1="1232.00" y1="162.10" x2="1232.00" y2="212.20" stroke="#E8E8E8" stroke-width="0.8" />
<line x1="1241.85" y1="162.10" x2="1241.85" y2="212.20" stroke="#E8E8E8" stroke-width="0.8" />
<line x1="1251.70" y1="162.10" x2="1251.70" y2="212.20" stroke="#E8E8E8" stroke-width="0.8" />
<line x1="1261.55" y1="162.10" x2="1261.55" y2="212.20" stroke="#E8E8E8" stroke-width="0.8" />
<line x1="1271.40" y1="162.10" x2="1271.40" y2="212.20" stroke="#E8E8E8" stroke-width="0.8" />
<line x1="1281.25" y1="162.10" x2="1281.25" y2="212.20" stroke="#E8E8E8" stroke-width="0.8" />
<line x1="1291.10" y1="162.10" x2="1291.10" y2="212.20" stroke="#E8E8E8" stroke-width="0.8" />
<line x1="1300.95" y1="162.10" x2="1300.95" y2="212.20" stroke="#E8E8E8" stroke-width="0.8" />
<line x1="1310.80" y1="162.10" x2="1310.80" y2="212.20" stroke="#E8E8E8" stroke-width="0.8" />
<line x1="1320.65" y1="162.10" x2="1320.65" y2="212.20" stroke="#E8E8E8" stroke-width="0.8" />
<line x1="1330.50" y1="162.10" x2="1330.50" y2="212.20" stroke="#E8E8E8" stroke-width="0.8" />
<rect x="1212.01" y="198.10" width="2.12" height="6.30" fill="#4472C4" opacity="0.9"/>
<rect x="1214.03" y="198.10" width="2.12" height="7.42" fill="#ED7D31" opacity="0.9"/>
<rect x="1216.04" y="198.10" width="2.12" height="8.68" fill="#A5A5A5" opacity="0.9"/>
<rect x="1222.09" y="198.10" width="2.12" height="5.32" fill="#4472C4" opacity="0.9"/>
<rect x="1224.11" y="198.10" width="2.12" height="4.06" fill="#ED7D31" opacity="0.9"/>
<rect x="1226.12" y="198.10" width="2.12" height="5.74" fill="#A5A5A5" opacity="0.9"/>
<rect x="1232.18" y="197.26" width="2.12" height="0.84" fill="#4472C4" opacity="0.9"/>
<rect x="1234.19" y="196.28" width="2.12" height="1.82" fill="#ED7D31" opacity="0.9"/>
<rect x="1236.21" y="195.02" width="2.12" height="3.08" fill="#A5A5A5" opacity="0.9"/>
<rect x="1242.26" y="185.22" width="2.12" height="12.88" fill="#4472C4" opacity="0.9"/>
<rect x="1244.28" y="186.48" width="2.12" height="11.62" fill="#ED7D31" opacity="0.9"/>
<rect x="1246.29" y="185.92" width="2.12" height="12.18" fill="#A5A5A5" opacity="0.9"/>
<rect x="1252.34" y="175.42" width="2.12" height="22.68" fill="#4472C4" opacity="0.9"/>
<rect x="1254.36" y="176.40" width="2.12" height="21.70" fill="#ED7D31" opacity="0.9"/>
<rect x="1256.38" y="175.28" width="2.12" height="22.82" fill="#A5A5A5" opacity="0.9"/>
<rect x="1262.43" y="169.68" width="2.12" height="28.42" fill="#4472C4" opacity="0.9"/>
<rect x="1264.44" y="167.72" width="2.12" height="30.38" fill="#ED7D31" opacity="0.9"/>
<rect x="1266.46" y="168.98" width="2.12" height="29.12" fill="#A5A5A5" opacity="0.9"/>
<rect x="1272.51" y="166.88" width="2.12" height="31.22" fill="#4472C4" opacity="0.9"/>
<rect x="1274.53" y="167.44" width="2.12" height="30.66" fill="#ED7D31" opacity="0.9"/>
<rect x="1276.54" y="167.16" width="2.12" height="30.94" fill="#A5A5A5" opacity="0.9"/>
<rect x="1282.59" y="168.00" width="2.12" height="30.10" fill="#4472C4" opacity="0.9"/>
<rect x="1284.61" y="165.62" width="2.12" height="32.48" fill="#ED7D31" opacity="0.9"/>
<rect x="1286.62" y="167.44" width="2.12" height="30.66" fill="#A5A5A5" opacity="0.9"/>
<rect x="1292.68" y="175.00" width="2.12" height="23.10" fill="#4472C4" opacity="0.9"/>
<rect x="1294.69" y="176.82" width="2.12" height="21.28" fill="#ED7D31" opacity="0.9"/>
<rect x="1296.71" y="177.66" width="2.12" height="20.44" fill="#A5A5A5" opacity="0.9"/>
<rect x="1302.76" y="184.66" width="2.12" height="13.44" fill="#4472C4" opacity="0.9"/>
<rect x="1304.78" y="185.50" width="2.12" height="12.60" fill="#ED7D31" opacity="0.9"/>
<rect x="1306.79" y="185.78" width="2.12" height="12.32" fill="#A5A5A5" opacity="0.9"/>
<rect x="1312.84" y="195.02" width="2.12" height="3.08" fill="#4472C4" opacity="0.9"/>
<rect x="1314.86" y="196.00" width="2.12" height="2.10" fill="#ED7D31" opacity="0.9"/>
<rect x="1316.88" y="195.58" width="2.12" height="2.52" fill="#A5A5A5" opacity="0.9"/>
<rect x="1322.93" y="198.10" width="2.12" height="1.68" fill="#4472C4" opacity="0.9"/>
<rect x="1324.94" y="198.10" width="2.12" height="2.80" fill="#ED7D31" opacity="0.9"/>
<rect x="1326.96" y="198.10" width="2.12" height="3.64" fill="#A5A5A5" opacity="0.9"/>
<line x1="1264.40" y1="161.60" x2="1278.40" y2="161.60" stroke="#9A9A9A" stroke-width="0.8" />
<rect x="1346.40" y="158.75" width="124.40" height="55.80" fill="url(#g8)" stroke="#2A2A2A" stroke-width="0.8" />
<line x1="1350.40" y1="164.25" x2="1467.80" y2="164.25" stroke="#5A5A5A" stroke-width="0.8" />
<line x1="1350.40" y1="171.15" x2="1467.80" y2="171.15" stroke="#5A5A5A" stroke-width="0.8" />
<line x1="1350.40" y1="178.05" x2="1467.80" y2="178.05" stroke="#5A5A5A" stroke-width="0.8" />
<line x1="1350.40" y1="184.95" x2="1467.80" y2="184.95" stroke="#5A5A5A" stroke-width="0.8" />
<line x1="1350.40" y1="191.85" x2="1467.80" y2="191.85" stroke="#5A5A5A" stroke-width="0.8" />
<line x1="1350.40" y1="198.75" x2="1467.80" y2="198.75" stroke="#5A5A5A" stroke-width="0.8" />
<line x1="1350.40" y1="205.65" x2="1467.80" y2="205.65" stroke="#5A5A5A" stroke-width="0.8" />
<line x1="1350.40" y1="212.55" x2="1467.80" y2="212.55" stroke="#5A5A5A" stroke-width="0.8" />
<rect x="1349.01" y="197.00" width="2.33" height="6.30" fill="#4472C4" opacity="0.9"/>
<rect x="1351.23" y="197.00" width="2.33" height="7.42" fill="#ED7D31" opacity="0.9"/>
<rect x="1353.45" y="197.00" width="2.33" height="8.68" fill="#A5A5A5" opacity="0.9"/>
<rect x="1359.09" y="197.00" width="2.33" height="5.32" fill="#4472C4" opacity="0.9"/>
<rect x="1361.31" y="197.00" width="2.33" height="4.06" fill="#ED7D31" opacity="0.9"/>
<rect x="1363.53" y="197.00" width="2.33" height="5.74" fill="#A5A5A5" opacity="0.9"/>
<rect x="1369.18" y="196.16" width="2.33" height="0.84" fill="#4472C4" opacity="0.9"/>
<rect x="1371.39" y="195.18" width="2.33" height="1.82" fill="#ED7D31" opacity="0.9"/>
<rect x="1373.61" y="193.92" width="2.33" height="3.08" fill="#A5A5A5" opacity="0.9"/>
<rect x="1379.26" y="184.12" width="2.33" height="12.88" fill="#4472C4" opacity="0.9"/>
<rect x="1381.48" y="185.38" width="2.33" height="11.62" fill="#ED7D31" opacity="0.9"/>
<rect x="1383.70" y="184.82" width="2.33" height="12.18" fill="#A5A5A5" opacity="0.9"/>
<rect x="1389.34" y="174.32" width="2.33" height="22.68" fill="#4472C4" opacity="0.9"/>
<rect x="1391.56" y="175.30" width="2.33" height="21.70" fill="#ED7D31" opacity="0.9"/>
<rect x="1393.78" y="174.18" width="2.33" height="22.82" fill="#A5A5A5" opacity="0.9"/>
<rect x="1399.43" y="168.58" width="2.33" height="28.42" fill="#4472C4" opacity="0.9"/>
<rect x="1401.64" y="166.62" width="2.33" height="30.38" fill="#ED7D31" opacity="0.9"/>
<rect x="1403.86" y="167.88" width="2.33" height="29.12" fill="#A5A5A5" opacity="0.9"/>
<rect x="1409.51" y="165.78" width="2.33" height="31.22" fill="#4472C4" opacity="0.9"/>
<rect x="1411.73" y="166.34" width="2.33" height="30.66" fill="#ED7D31" opacity="0.9"/>
<rect x="1413.95" y="166.06" width="2.33" height="30.94" fill="#A5A5A5" opacity="0.9"/>
<rect x="1419.59" y="166.90" width="2.33" height="30.10" fill="#4472C4" opacity="0.9"/>
<rect x="1421.81" y="164.52" width="2.33" height="32.48" fill="#ED7D31" opacity="0.9"/>
<rect x="1424.03" y="166.34" width="2.33" height="30.66" fill="#A5A5A5" opacity="0.9"/>
<rect x="1429.68" y="173.90" width="2.33" height="23.10" fill="#4472C4" opacity="0.9"/>
<rect x="1431.89" y="175.72" width="2.33" height="21.28" fill="#ED7D31" opacity="0.9"/>
<rect x="1434.11" y="176.56" width="2.33" height="20.44" fill="#A5A5A5" opacity="0.9"/>
<rect x="1439.76" y="183.56" width="2.33" height="13.44" fill="#4472C4" opacity="0.9"/>
<rect x="1441.98" y="184.40" width="2.33" height="12.60" fill="#ED7D31" opacity="0.9"/>
<rect x="1444.20" y="184.68" width="2.33" height="12.32" fill="#A5A5A5" opacity="0.9"/>
<rect x="1449.84" y="193.92" width="2.33" height="3.08" fill="#4472C4" opacity="0.9"/>
<rect x="1452.06" y="194.90" width="2.33" height="2.10" fill="#ED7D31" opacity="0.9"/>
<rect x="1454.28" y="194.48" width="2.33" height="2.52" fill="#A5A5A5" opacity="0.9"/>
<rect x="1459.93" y="197.00" width="2.33" height="1.68" fill="#4472C4" opacity="0.9"/>
<rect x="1462.14" y="197.00" width="2.33" height="2.80" fill="#ED7D31" opacity="0.9"/>
<rect x="1464.36" y="197.00" width="2.33" height="3.64" fill="#A5A5A5" opacity="0.9"/>
<line x1="1401.60" y1="163.25" x2="1415.60" y2="163.25" stroke="#BBBBBB" stroke-width="0.8" />
<rect x="378.30" y="143.70" width="136.20" height="86.00" fill="none" stroke="#4A4A4A" stroke-width="1.7" />
<text transform="translate(849.50,294.80) scale(1.0000,1)" font-size="16.58" fill="#333" >Стилі діаграм</text>
<line x1="1538.75" y1="129.00" x2="1538.75" y2="295.00" stroke="#E1E1E1" stroke-width="1.2" />
<rect x="1588.00" y="146.90" width="42.40" height="33.20" fill="#FAFAFA" />
<rect x="1602.20" y="146.90" width="28.20" height="11.30" fill="#8CC2EE" />
<rect x="1588.00" y="158.20" width="14.20" height="21.90" fill="#8CC2EE" />
<path d="M1588 158.2 H1630.4 M1588 169.2 H1630.4 M1602.2 146.9 V180.1 M1616.5 146.9 V180.1" fill="none" stroke="#777" stroke-width="1.3" />
<path d="M1602.2 146.9 V169.2 M1588 169.2 H1602.2 M1588 158.2 H1630.4 M1616.5 146.9 V158.2" fill="none" stroke="#0F6CBD" stroke-width="1.3" />
<path d="M1588 146.9 H1630.4 V180.1 H1588 Z" fill="none" stroke="#333333" stroke-width="1.5" />
<path d="M1584 168 L1612 140 L1640 140 L1640 130 L1584 130 Z" fill="#FFFFFF" />
<path d="M1591.3 160.5 V145.6 H1606.9 M1600.6 139.3 L1606.9 145.6 L1603 149.5 M1585 154.9 L1591.3 160.9 L1597.6 154.6" fill="none" stroke="#333333" stroke-width="1.5" />
<path d="M1588 164 V180.1 M1609.5 146.9 H1630.4" fill="none" stroke="#333333" stroke-width="1.5" />
<text transform="translate(1550.98,219.60) scale(0.9679,1)" font-size="19.64" fill="#262626" >Перевернути</text>
<text transform="translate(1591.63,244.20) scale(0.9986,1)" font-size="19.64" fill="#262626" >вісь</text>
<rect x="1686.20" y="146.90" width="42.20" height="33.20" fill="#FAFAFA" />
<rect x="1686.20" y="146.90" width="27.90" height="22.30" fill="#8CC2EE" />
<path d="M1686.2 158.2 H1728.4 M1686.2 169.2 H1728.4 M1700.2 146.9 V180.1 M1714.1 146.9 V180.1" fill="none" stroke="#777" stroke-width="1.3" />
<path d="M1686.2 146.9 H1714.1 V169.2 H1686.2 Z M1686.2 158.2 H1714.1 M1700.2 146.9 V169.2" fill="none" stroke="#0F6CBD" stroke-width="1.4" />
<path d="M1714.1 146.9 H1728.4 V180.1 H1686.2 V169.2" fill="none" stroke="#333333" stroke-width="1.5" />
<path d="M1706.6 190 V174 H1713.9 V163 H1725.6 V167.3 H1733.2 V190 Z" fill="#FFFFFF" />
<rect x="1708.10" y="175.50" width="7.30" height="12.60" fill="#C8C8C8" stroke="#7A7A7A" stroke-width="1.4" />
<rect x="1724.10" y="168.80" width="7.60" height="19.30" fill="#8CC2EE" stroke="#0F6CBD" stroke-width="1.4" />
<rect x="1715.40" y="164.50" width="8.70" height="23.60" fill="#FAFAFA" stroke="#333333" stroke-width="1.5" />
<text transform="translate(1669.95,219.60) scale(0.9561,1)" font-size="19.64" fill="#262626" >Вибрати</text>
<text transform="translate(1689.81,244.20) scale(0.9423,1)" font-size="19.64" fill="#262626" >дані</text>
<line x1="1757.00" y1="129.00" x2="1757.00" y2="295.00" stroke="#E1E1E1" stroke-width="1.2" />
<rect x="1770.00" y="128.00" width="102.00" height="141.00" fill="#F3F3F3" rx="6" />
<rect x="1800.50" y="159.50" width="12.50" height="25.60" fill="#C8C8C8" stroke="#7A7A7A" stroke-width="1.5" />
<rect x="1826.30" y="150.20" width="12.50" height="34.90" fill="#8CC2EE" stroke="#0F6CBD" stroke-width="1.5" />
<rect x="1813.00" y="142.30" width="13.30" height="42.80" fill="#FAFAFA" stroke="#333333" stroke-width="1.5" />
<text transform="translate(1770.10,219.60) scale(0.9408,1)" font-size="19.64" fill="#262626" >Змінити тип</text>
<text transform="translate(1782.81,244.20) scale(0.9531,1)" font-size="19.64" fill="#262626" >діаграми</text>
<line x1="1883.60" y1="129.00" x2="1883.60" y2="295.00" stroke="#E1E1E1" stroke-width="1.2" />
<rect x="1929.50" y="143.90" width="42.10" height="38.10" fill="#FAFAFA" />
<path d="M1929.5 154.8 H1971.6 M1929.5 165.9 H1949 M1943.5 143.9 V182 M1957.6 143.9 V162" fill="none" stroke="#777" stroke-width="1.3" />
<path d="M1971.6 167 V143.9 H1929.5 V182 H1941.2 L1948.6 175.2 H1929.5" fill="none" stroke="#333333" stroke-width="1.5" />
<path d="M1949.8 190 V174.2 H1957.25 V162.9 H1968.5 V167.4 H1976.7 V190 Z" fill="#FFFFFF" />
<rect x="1951.30" y="175.70" width="7.45" height="12.50" fill="#C8C8C8" stroke="#7A7A7A" stroke-width="1.4" />
<rect x="1967.00" y="168.90" width="8.20" height="19.30" fill="#8CC2EE" stroke="#0F6CBD" stroke-width="1.4" />
<rect x="1958.75" y="164.40" width="8.25" height="23.80" fill="#FAFAFA" stroke="#333333" stroke-width="1.5" />
<text transform="translate(1896.51,219.60) scale(0.9500,1)" font-size="19.64" fill="#262626" >Перемістити</text>
<text transform="translate(1912.82,244.20) scale(0.9363,1)" font-size="19.64" fill="#262626" >діаграму</text>
<line x1="2016.50" y1="129.00" x2="2016.50" y2="295.00" stroke="#E1E1E1" stroke-width="1.2" />
<text transform="translate(1630.60,294.80) scale(1.0000,1)" font-size="16.58" fill="#333" >Дані</text>
<text transform="translate(1806.57,294.80) scale(1.0000,1)" font-size="16.58" fill="#333" >Тип</text>
<text transform="translate(1893.61,294.80) scale(1.0174,1)" font-size="16.58" fill="#333" >Розташування</text>
<path d="M2508 279 l7.5 7.5 l7.5 -7.5" fill="none" stroke="#333" stroke-width="1.6" />
<rect x="12.50" y="317.80" width="156.50" height="32.20" fill="#FFFFFF" rx="6" stroke="#E6E6E6" stroke-width="1" />
<text transform="translate(16.85,340.50) scale(0.9600,1)" font-size="21.53" fill="#262626" >Діаграма 1</text>
<path d="M148.5 330 l7 7 l7 -7" fill="none" stroke="#333" stroke-width="1.5" />
<circle cx="185.30" cy="327.50" r="1.70" fill="#333"/>
<circle cx="185.30" cy="334.00" r="1.70" fill="#333"/>
<circle cx="185.30" cy="340.50" r="1.70" fill="#333"/>
<rect x="202.00" y="317.80" width="112.00" height="32.20" fill="#FFFFFF" rx="6" stroke="#E6E6E6" stroke-width="1" />
<path d="M212 325 l18 18 M230 325 l-18 18" fill="none" stroke="#9A9A9A" stroke-width="1.5" />
<path d="M246 335 l7 7 l16 -16" fill="none" stroke="#9A9A9A" stroke-width="1.5" />
<text x="284" y="342" font-family="Liberation Serif" font-style="italic" font-size="26" fill="#222">f</text>
<text x="293" y="342" font-family="Liberation Serif" font-style="italic" font-size="20" fill="#222">x</text>
<rect x="322.00" y="317.80" width="2224.70" height="32.20" fill="#FFFFFF" rx="6" stroke="#E6E6E6" stroke-width="1" />
<path d="M2526 331 l7 7 l7 -7" fill="none" stroke="#555" stroke-width="1.4" />
<rect x="3.00" y="361.00" width="2527.00" height="29.60" fill="#EFEFEF" />
<rect x="3.00" y="390.60" width="39.00" height="948.40" fill="#EFEFEF" />
<rect x="42.00" y="390.60" width="2488.00" height="948.40" fill="#FFFFFF" />
<line x1="42.00" y1="390.30" x2="2530.00" y2="390.30" stroke="#C8C8C8" stroke-width="1.3" />
<line x1="41.80" y1="361.00" x2="41.80" y2="1339.00" stroke="#C8C8C8" stroke-width="1.3" />
<path d="M40 364.2 L40 388.5 L15.3 388.5 Z" fill="#B4B4B4" />
<text transform="translate(57.01,384.40) scale(1.0000,1)" font-size="20.95" fill="#1E1E1E" >A</text>
<text transform="translate(200.70,384.40) scale(1.0000,1)" font-size="20.95" fill="#1E1E1E" >B</text>
<text transform="translate(444.30,384.40) scale(1.0000,1)" font-size="20.95" fill="#1E1E1E" >C</text>
<text transform="translate(689.07,384.40) scale(1.0000,1)" font-size="20.95" fill="#1E1E1E" >D</text>
<text transform="translate(932.59,384.40) scale(1.0000,1)" font-size="20.95" fill="#1E1E1E" >E</text>
<text transform="translate(1107.17,384.40) scale(1.0000,1)" font-size="20.95" fill="#1E1E1E" >F</text>
<text transform="translate(1209.12,384.40) scale(1.0000,1)" font-size="20.95" fill="#1E1E1E" >G</text>
<text transform="translate(1311.43,384.40) scale(1.0000,1)" font-size="20.95" fill="#1E1E1E" >H</text>
<text transform="translate(1418.09,384.40) scale(1.0000,1)" font-size="20.95" fill="#1E1E1E" >I</text>
<text transform="translate(1518.39,384.40) scale(1.0000,1)" font-size="20.95" fill="#1E1E1E" >J</text>
<line x1="85.90" y1="363.00" x2="85.90" y2="390.00" stroke="#D4D4D4" stroke-width="1.2" />
<line x1="330.00" y1="363.00" x2="330.00" y2="390.00" stroke="#D4D4D4" stroke-width="1.2" />
<line x1="574.00" y1="363.00" x2="574.00" y2="390.00" stroke="#D4D4D4" stroke-width="1.2" />
<line x1="819.00" y1="363.00" x2="819.00" y2="390.00" stroke="#D4D4D4" stroke-width="1.2" />
<line x1="1063.00" y1="363.00" x2="1063.00" y2="390.00" stroke="#D4D4D4" stroke-width="1.2" />
<line x1="1166.00" y1="363.00" x2="1166.00" y2="390.00" stroke="#D4D4D4" stroke-width="1.2" />
<line x1="1268.00" y1="363.00" x2="1268.00" y2="390.00" stroke="#D4D4D4" stroke-width="1.2" />
<line x1="1370.00" y1="363.00" x2="1370.00" y2="390.00" stroke="#D4D4D4" stroke-width="1.2" />
<line x1="1472.00" y1="363.00" x2="1472.00" y2="390.00" stroke="#D4D4D4" stroke-width="1.2" />
<text transform="translate(9.45,411.80) scale(1.0000,1)" font-size="21.24" fill="#1E1E1E" >17</text>
<line x1="3.00" y1="418.75" x2="42.00" y2="418.75" stroke="#D4D4D4" stroke-width="1.2" />
<text transform="translate(9.37,441.74) scale(1.0000,1)" font-size="21.24" fill="#1E1E1E" >18</text>
<line x1="3.00" y1="448.69" x2="42.00" y2="448.69" stroke="#D4D4D4" stroke-width="1.2" />
<text transform="translate(9.40,471.68) scale(1.0000,1)" font-size="21.24" fill="#1E1E1E" >19</text>
<line x1="3.00" y1="478.63" x2="42.00" y2="478.63" stroke="#D4D4D4" stroke-width="1.2" />
<text transform="translate(9.58,501.62) scale(1.0000,1)" font-size="21.24" fill="#1E1E1E" >20</text>
<line x1="3.00" y1="508.57" x2="42.00" y2="508.57" stroke="#D4D4D4" stroke-width="1.2" />
<text transform="translate(9.69,531.56) scale(1.0000,1)" font-size="21.24" fill="#1E1E1E" >21</text>
<line x1="3.00" y1="538.51" x2="42.00" y2="538.51" stroke="#D4D4D4" stroke-width="1.2" />
<text transform="translate(9.71,561.50) scale(1.0000,1)" font-size="21.24" fill="#1E1E1E" >22</text>
<line x1="3.00" y1="568.45" x2="42.00" y2="568.45" stroke="#D4D4D4" stroke-width="1.2" />
<text transform="translate(9.63,591.44) scale(1.0000,1)" font-size="21.24" fill="#1E1E1E" >23</text>
<line x1="3.00" y1="598.39" x2="42.00" y2="598.39" stroke="#D4D4D4" stroke-width="1.2" />
<text transform="translate(9.47,621.38) scale(1.0000,1)" font-size="21.24" fill="#1E1E1E" >24</text>
<line x1="3.00" y1="628.33" x2="42.00" y2="628.33" stroke="#D4D4D4" stroke-width="1.2" />
<text transform="translate(9.61,651.32) scale(1.0000,1)" font-size="21.24" fill="#1E1E1E" >25</text>
<line x1="3.00" y1="658.27" x2="42.00" y2="658.27" stroke="#D4D4D4" stroke-width="1.2" />
<text transform="translate(9.63,681.26) scale(1.0000,1)" font-size="21.24" fill="#1E1E1E" >26</text>
<line x1="3.00" y1="688.21" x2="42.00" y2="688.21" stroke="#D4D4D4" stroke-width="1.2" />
<text transform="translate(9.71,711.20) scale(1.0000,1)" font-size="21.24" fill="#1E1E1E" >27</text>
<line x1="3.00" y1="718.15" x2="42.00" y2="718.15" stroke="#D4D4D4" stroke-width="1.2" />
<text transform="translate(9.63,741.14) scale(1.0000,1)" font-size="21.24" fill="#1E1E1E" >28</text>
<line x1="3.00" y1="748.09" x2="42.00" y2="748.09" stroke="#D4D4D4" stroke-width="1.2" />
<text transform="translate(9.66,771.08) scale(1.0000,1)" font-size="21.24" fill="#1E1E1E" >29</text>
<line x1="3.00" y1="778.03" x2="42.00" y2="778.03" stroke="#D4D4D4" stroke-width="1.2" />
<text transform="translate(9.71,801.02) scale(1.0000,1)" font-size="21.24" fill="#1E1E1E" >30</text>
<line x1="3.00" y1="807.97" x2="42.00" y2="807.97" stroke="#D4D4D4" stroke-width="1.2" />
<text transform="translate(9.82,830.96) scale(1.0000,1)" font-size="21.24" fill="#1E1E1E" >31</text>
<line x1="3.00" y1="837.91" x2="42.00" y2="837.91" stroke="#D4D4D4" stroke-width="1.2" />
<text transform="translate(9.85,860.90) scale(1.0000,1)" font-size="21.24" fill="#1E1E1E" >32</text>
<line x1="3.00" y1="867.85" x2="42.00" y2="867.85" stroke="#D4D4D4" stroke-width="1.2" />
<text transform="translate(9.77,890.84) scale(1.0000,1)" font-size="21.24" fill="#1E1E1E" >33</text>
<line x1="3.00" y1="897.79" x2="42.00" y2="897.79" stroke="#D4D4D4" stroke-width="1.2" />
<text transform="translate(9.61,920.78) scale(1.0000,1)" font-size="21.24" fill="#1E1E1E" >34</text>
<line x1="3.00" y1="927.73" x2="42.00" y2="927.73" stroke="#D4D4D4" stroke-width="1.2" />
<text transform="translate(9.74,950.72) scale(1.0000,1)" font-size="21.24" fill="#1E1E1E" >35</text>
<line x1="3.00" y1="957.67" x2="42.00" y2="957.67" stroke="#D4D4D4" stroke-width="1.2" />
<text transform="translate(9.77,980.66) scale(1.0000,1)" font-size="21.24" fill="#1E1E1E" >36</text>
<line x1="3.00" y1="987.61" x2="42.00" y2="987.61" stroke="#D4D4D4" stroke-width="1.2" />
<text transform="translate(9.85,1010.60) scale(1.0000,1)" font-size="21.24" fill="#1E1E1E" >37</text>
<line x1="3.00" y1="1017.55" x2="42.00" y2="1017.55" stroke="#D4D4D4" stroke-width="1.2" />
<text transform="translate(9.77,1040.54) scale(1.0000,1)" font-size="21.24" fill="#1E1E1E" >38</text>
<line x1="3.00" y1="1047.49" x2="42.00" y2="1047.49" stroke="#D4D4D4" stroke-width="1.2" />
<text transform="translate(9.79,1070.48) scale(1.0000,1)" font-size="21.24" fill="#1E1E1E" >39</text>
<line x1="3.00" y1="1077.43" x2="42.00" y2="1077.43" stroke="#D4D4D4" stroke-width="1.2" />
<text transform="translate(9.87,1100.42) scale(1.0000,1)" font-size="21.24" fill="#1E1E1E" >40</text>
<line x1="3.00" y1="1107.37" x2="42.00" y2="1107.37" stroke="#D4D4D4" stroke-width="1.2" />
<text transform="translate(9.98,1130.36) scale(1.0000,1)" font-size="21.24" fill="#1E1E1E" >41</text>
<line x1="3.00" y1="1137.31" x2="42.00" y2="1137.31" stroke="#D4D4D4" stroke-width="1.2" />
<text transform="translate(10.01,1160.30) scale(1.0000,1)" font-size="21.24" fill="#1E1E1E" >42</text>
<line x1="3.00" y1="1167.25" x2="42.00" y2="1167.25" stroke="#D4D4D4" stroke-width="1.2" />
<text transform="translate(9.93,1190.24) scale(1.0000,1)" font-size="21.24" fill="#1E1E1E" >43</text>
<line x1="3.00" y1="1197.19" x2="42.00" y2="1197.19" stroke="#D4D4D4" stroke-width="1.2" />
<text transform="translate(9.77,1220.18) scale(1.0000,1)" font-size="21.24" fill="#1E1E1E" >44</text>
<line x1="3.00" y1="1227.13" x2="42.00" y2="1227.13" stroke="#D4D4D4" stroke-width="1.2" />
<text transform="translate(9.90,1250.12) scale(1.0000,1)" font-size="21.24" fill="#1E1E1E" >45</text>
<line x1="3.00" y1="1257.07" x2="42.00" y2="1257.07" stroke="#D4D4D4" stroke-width="1.2" />
<text transform="translate(9.93,1280.06) scale(1.0000,1)" font-size="21.24" fill="#1E1E1E" >46</text>
<line x1="3.00" y1="1287.01" x2="42.00" y2="1287.01" stroke="#D4D4D4" stroke-width="1.2" />
<text transform="translate(10.01,1310.00) scale(1.0000,1)" font-size="21.24" fill="#1E1E1E" >47</text>
<line x1="3.00" y1="1316.95" x2="42.00" y2="1316.95" stroke="#D4D4D4" stroke-width="1.2" />
<text transform="translate(9.93,1339.94) scale(1.0000,1)" font-size="21.24" fill="#1E1E1E" >48</text>
<line x1="150.00" y1="494.50" x2="2100.00" y2="494.50" stroke="#D9D9D9" stroke-width="1.6" />
<text transform="translate(107.38,501.20) scale(1.0000,1)" font-size="19.93" fill="#595959" >25</text>
<line x1="150.00" y1="601.10" x2="2100.00" y2="601.10" stroke="#D9D9D9" stroke-width="1.6" />
<text transform="translate(107.33,607.80) scale(1.0000,1)" font-size="19.93" fill="#595959" >20</text>
<line x1="150.00" y1="707.70" x2="2100.00" y2="707.70" stroke="#D9D9D9" stroke-width="1.6" />
<text transform="translate(107.38,714.40) scale(1.0000,1)" font-size="19.93" fill="#595959" >15</text>
<line x1="150.00" y1="814.30" x2="2100.00" y2="814.30" stroke="#D9D9D9" stroke-width="1.6" />
<text transform="translate(107.33,821.00) scale(1.0000,1)" font-size="19.93" fill="#595959" >10</text>
<line x1="150.00" y1="920.90" x2="2100.00" y2="920.90" stroke="#D9D9D9" stroke-width="1.6" />
<text transform="translate(118.44,927.60) scale(1.0000,1)" font-size="19.93" fill="#595959" >5</text>
<line x1="150.00" y1="1027.50" x2="2100.00" y2="1027.50" stroke="#D9D9D9" stroke-width="1.6" />
<text transform="translate(118.39,1034.20) scale(1.0000,1)" font-size="19.93" fill="#595959" >0</text>
<line x1="150.00" y1="1134.10" x2="2100.00" y2="1134.10" stroke="#D9D9D9" stroke-width="1.6" />
<text transform="translate(111.81,1140.80) scale(1.0000,1)" font-size="19.93" fill="#595959" >-5</text>
<line x1="150.00" y1="1240.70" x2="2100.00" y2="1240.70" stroke="#D9D9D9" stroke-width="1.6" />
<text transform="translate(100.65,1247.40) scale(1.0000,1)" font-size="19.93" fill="#595959" >-10</text>
<rect x="181.40" y="1027.50" width="28.00" height="95.94" fill="#4472C4" />
<rect x="217.40" y="1027.50" width="28.00" height="113.00" fill="#ED7D31" />
<rect x="253.40" y="1027.50" width="28.00" height="132.18" fill="#A5A5A5" />
<text transform="translate(213.06,1171.70) scale(1.0000,1)" font-size="21.24" font-weight="bold" fill="#404040" >-5,3</text>
<rect x="344.54" y="1027.50" width="28.00" height="81.02" fill="#4472C4" />
<rect x="380.54" y="1027.50" width="28.00" height="61.83" fill="#ED7D31" />
<rect x="416.54" y="1027.50" width="28.00" height="87.41" fill="#A5A5A5" />
<text transform="translate(376.20,1120.53) scale(1.0000,1)" font-size="21.24" font-weight="bold" fill="#404040" >-2,9</text>
<rect x="507.68" y="1014.71" width="28.00" height="12.79" fill="#4472C4" />
<rect x="543.68" y="999.78" width="28.00" height="27.72" fill="#ED7D31" />
<rect x="579.68" y="980.60" width="28.00" height="46.90" fill="#A5A5A5" />
<text transform="translate(542.63,984.58) scale(1.0000,1)" font-size="21.24" font-weight="bold" fill="#404040" >1,3</text>
<rect x="670.82" y="831.36" width="28.00" height="196.14" fill="#4472C4" />
<rect x="706.82" y="850.54" width="28.00" height="176.96" fill="#ED7D31" />
<rect x="742.82" y="842.02" width="28.00" height="185.48" fill="#A5A5A5" />
<text transform="translate(706.09,835.34) scale(1.0000,1)" font-size="21.24" font-weight="bold" fill="#404040" >8,3</text>
<rect x="833.96" y="682.12" width="28.00" height="345.38" fill="#4472C4" />
<rect x="869.96" y="697.04" width="28.00" height="330.46" fill="#ED7D31" />
<rect x="905.96" y="679.98" width="28.00" height="347.52" fill="#A5A5A5" />
<text transform="translate(862.94,681.84) scale(1.0000,1)" font-size="21.24" font-weight="bold" fill="#404040" >15,5</text>
<rect x="997.10" y="594.70" width="28.00" height="432.80" fill="#4472C4" />
<rect x="1033.10" y="564.86" width="28.00" height="462.64" fill="#ED7D31" />
<rect x="1069.10" y="584.04" width="28.00" height="443.46" fill="#A5A5A5" />
<text transform="translate(1026.53,549.66) scale(1.0000,1)" font-size="21.24" font-weight="bold" fill="#404040" >21,7</text>
<rect x="1160.24" y="552.06" width="28.00" height="475.44" fill="#4472C4" />
<rect x="1196.24" y="560.59" width="28.00" height="466.91" fill="#ED7D31" />
<rect x="1232.24" y="556.33" width="28.00" height="471.17" fill="#A5A5A5" />
<text transform="translate(1189.59,545.39) scale(1.0000,1)" font-size="21.24" font-weight="bold" fill="#404040" >21,9</text>
<rect x="1323.38" y="569.12" width="28.00" height="458.38" fill="#4472C4" />
<rect x="1359.38" y="532.88" width="28.00" height="494.62" fill="#ED7D31" />
<rect x="1395.38" y="560.59" width="28.00" height="466.91" fill="#A5A5A5" />
<text transform="translate(1352.75,517.68) scale(1.0000,1)" font-size="21.24" font-weight="bold" fill="#404040" >23,2</text>
<rect x="1486.52" y="654.40" width="28.00" height="373.10" fill="#4472C4" />
<rect x="1522.52" y="624.55" width="28.00" height="402.95" fill="#ED7D31" />
<rect x="1558.52" y="652.27" width="28.00" height="375.23" fill="#A5A5A5" />
<text transform="translate(1515.58,609.35) scale(1.0000,1)" font-size="21.24" font-weight="bold" fill="#404040" >18,9</text>
<text transform="translate(195.99,1067.20) scale(0.9578,1)" font-size="22.11" font-weight="bold" font-style="italic" fill="#595959" >Січень</text>
<text transform="translate(354.72,1067.20) scale(0.9965,1)" font-size="22.11" font-weight="bold" font-style="italic" fill="#595959" >Лютий</text>
<text transform="translate(507.62,1067.20) scale(0.9743,1)" font-size="22.11" font-weight="bold" font-style="italic" fill="#595959" >Березень</text>
<text transform="translate(676.32,1067.20) scale(0.9861,1)" font-size="22.11" font-weight="bold" font-style="italic" fill="#595959" >Квітень</text>
<text transform="translate(839.16,1067.20) scale(0.9943,1)" font-size="22.11" font-weight="bold" font-style="italic" fill="#595959" >Травень</text>
<text transform="translate(1001.05,1067.20) scale(0.9825,1)" font-size="22.11" font-weight="bold" font-style="italic" fill="#595959" >Червень</text>
<text transform="translate(1170.32,1067.20) scale(0.9972,1)" font-size="22.11" font-weight="bold" font-style="italic" fill="#595959" >Липень</text>
<text transform="translate(1327.28,1067.20) scale(0.9673,1)" font-size="22.11" font-weight="bold" font-style="italic" fill="#595959" >Серпень</text>
<text transform="translate(984.65,457.80) scale(0.9894,1)" font-size="34.91" fill="#595959" >Назва діаграми</text>
<rect x="968.10" y="1280.50" width="15.60" height="15.30" fill="#4472C4" />
<text transform="translate(990.55,1295.80) scale(1.0293,1)" font-size="26.18" fill="#595959" >2016</text>
<rect x="1072.60" y="1280.50" width="16.40" height="15.30" fill="#ED7D31" />
<text transform="translate(1095.35,1295.80) scale(1.0311,1)" font-size="26.18" fill="#595959" >2017</text>
<rect x="1177.00" y="1280.50" width="16.70" height="15.30" fill="#A5A5A5" />
<text transform="translate(1200.35,1295.80) scale(1.0293,1)" font-size="26.18" fill="#595959" >2018</text>
<rect x="87.00" y="406.30" width="2043.30" height="919.30" fill="none" stroke="#7A7A7A" stroke-width="1.8" />
<circle cx="87.30" cy="406.60" r="5.80" fill="#FFFFFF" stroke="#6E6E6E" stroke-width="3.2"/>
<circle cx="1108.60" cy="406.60" r="5.80" fill="#FFFFFF" stroke="#6E6E6E" stroke-width="3.2"/>
<circle cx="2130.30" cy="406.60" r="5.80" fill="#FFFFFF" stroke="#6E6E6E" stroke-width="3.2"/>
<circle cx="87.30" cy="865.80" r="5.80" fill="#FFFFFF" stroke="#6E6E6E" stroke-width="3.2"/>
<circle cx="2130.30" cy="865.80" r="5.80" fill="#FFFFFF" stroke="#6E6E6E" stroke-width="3.2"/>
<circle cx="87.30" cy="1325.60" r="5.80" fill="#FFFFFF" stroke="#6E6E6E" stroke-width="3.2"/>
<circle cx="1108.60" cy="1325.60" r="5.80" fill="#FFFFFF" stroke="#6E6E6E" stroke-width="3.2"/>
<circle cx="2130.30" cy="1325.60" r="5.80" fill="#FFFFFF" stroke="#6E6E6E" stroke-width="3.2"/>
<rect x="3.00" y="1339.00" width="2554.00" height="50.70" fill="#EFEFEF" />
<path d="M40 1356 l-7 7 l7 7" fill="none" stroke="#9A9A9A" stroke-width="1.5" />
<path d="M82 1356 l7 7 l-7 7" fill="none" stroke="#9A9A9A" stroke-width="1.5" />
<path d="M166 1339.7 h127 v37 a6 6 0 0 1 -6 6 h-115 a6 6 0 0 1 -6 -6 z" fill="#FFFFFF" />
<text transform="translate(178.83,1368.60) scale(1.0078,1)" font-size="22.11" fill="#1E1E1E" >Додаток 1</text>
<rect x="178.60" y="1375.60" width="102.00" height="3.00" fill="#107C41" rx="1.5" />
<text transform="translate(320.83,1372.80) scale(1.0024,1)" font-size="22.11" fill="#333" >Додаток 2</text>
<text transform="translate(464.84,1372.80) scale(0.9948,1)" font-size="22.11" fill="#333" >Додаток 3</text>
<line x1="300.00" y1="1351.00" x2="300.00" y2="1378.00" stroke="#C8C8C8" stroke-width="1.2" />
<line x1="443.70" y1="1351.00" x2="443.70" y2="1378.00" stroke="#C8C8C8" stroke-width="1.2" />
<line x1="587.20" y1="1351.00" x2="587.20" y2="1378.00" stroke="#C8C8C8" stroke-width="1.2" />
<path d="M662.5 1354 v19 M653 1363.5 h19" fill="none" stroke="#333" stroke-width="1.6" />
<circle cx="1542.80" cy="1357.50" r="1.70" fill="#222"/>
<circle cx="1542.80" cy="1364.00" r="1.70" fill="#222"/>
<circle cx="1542.80" cy="1370.50" r="1.70" fill="#222"/>
<rect x="1568.00" y="1350.00" width="982.00" height="28.00" fill="#F5F5F5" rx="14" />
<path d="M1587.4 1357 v14 l-11 -7 z" fill="#6E6E6E" />
<rect x="1594.50" y="1357.80" width="883.30" height="12.50" fill="#6E6E6E" rx="6.2" />
<path d="M2513 1357 v14 l11 -7 z" fill="#6E6E6E" />
<rect x="2532.00" y="364.00" width="20.00" height="975.00" fill="#F5F5F5" rx="10" />
<path d="M2538 380 h14 l-7 -11 z" fill="#6E6E6E" />
<rect x="2539.00" y="710.00" width="12.50" height="561.00" fill="#6E6E6E" rx="6.2" />
<path d="M2538 1322.5 h14 l-7 11 z" fill="#6E6E6E" />
<rect x="3.00" y="1389.70" width="2554.00" height="46.80" fill="#F3F3F3" />
<line x1="3.00" y1="1390.00" x2="2557.00" y2="1390.00" stroke="#D6D6D6" stroke-width="1.2" />
<text transform="translate(25.94,1422.50) scale(0.9382,1)" font-size="18.91" fill="#333" >Готово</text>
<circle cx="137.10" cy="1407.30" r="2.60" fill="none" stroke="#222" stroke-width="1.2"/>
<path d="M141.2 1412.6 L145.6 1410.9 A1.7 1.7 0 0 0 144.4 1407.7 L139.5 1409.6 Q137.1 1410.6 134.7 1409.6 L129.8 1407.7 A1.7 1.7 0 0 0 128.6 1410.9 L133.4 1412.8 L131.8 1422.4 A1.8 1.8 0 0 0 135.3 1423.4 L137.1 1418.4 L138.6 1421.6" fill="none" stroke="#222" stroke-width="1.2" />
<path d="M139.3 1415.4 L149.3 1425.6 M149.3 1415.4 L139.3 1425.6" fill="none" stroke="#222" stroke-width="1.2" />
<text transform="translate(155.13,1422.50) scale(0.8859,1)" font-size="18.91" font-weight="bold" fill="#222" >Спеціальні можливості: щось не так</text>
<path d="M1809.3 1418.9 H1803.9 V1406.3 H1824.3 V1415" fill="none" stroke="#222" stroke-width="1.3" />
<path d="M1818.20 1412.30 L1820.35 1415.18 L1823.92 1415.60 L1822.50 1418.90 L1823.92 1422.20 L1820.35 1422.62 L1818.20 1425.50 L1816.05 1422.62 L1812.48 1422.20 L1813.90 1418.90 L1812.48 1415.60 L1816.05 1415.18 Z" fill="#F3F3F3" stroke="#222" stroke-width="1.2" stroke-linejoin="round"/>
<circle cx="1818.20" cy="1418.90" r="1.70" fill="#222"/>
<text transform="translate(1828.62,1422.50) scale(0.9092,1)" font-size="18.91" fill="#333" >Параметри відображення</text>
<rect x="2069.00" y="1390.60" width="65.00" height="45.90" fill="#E0E0E0" />
<path d="M2092 1405.6 h18 v18.4 h-18 z M2092 1411.6 h18 M2092 1417.8 h18 M2098.3 1405.6 v18.4 M2104.5 1405.6 v18.4" fill="none" stroke="#222" stroke-width="1.5" />
<path d="M2156.8 1405.6 h20 v18.4 h-20 z" fill="none" stroke="#222" stroke-width="1.5" />
<path d="M2161.9 1409 h9.9 v12 h-9.9 z" fill="none" stroke="#222" stroke-width="1.4" />
<path d="M2164 1411.6 h5.8 M2164 1414.8 h5.8 M2164 1418 h5.8" fill="none" stroke="#222" stroke-width="1.1" />
<path d="M2222.1 1405.6 h19.5 v18.4 h-19.5 z M2222.1 1416.2 H2234 V1405.6 M2227.8 1405.6 V1416.2" fill="none" stroke="#222" stroke-width="1.5" />
<line x1="2272.50" y1="1415.00" x2="2285.00" y2="1415.00" stroke="#555" stroke-width="1.4" />
<line x1="2293.40" y1="1415.00" x2="2448.40" y2="1415.00" stroke="#888" stroke-width="1.6" />
<rect x="2368.00" y="1406.00" width="7.00" height="18.00" fill="#6E6E6E" rx="1" />
<path d="M2463 1409 v12 M2457 1415 h12" fill="none" stroke="#555" stroke-width="1.4" />
<text transform="translate(2496.75,1422.50) scale(0.8794,1)" font-size="18.91" fill="#333" >100%</text>
<rect x="0.00" y="1436.50" width="2560.00" height="3.50" fill="#157D42" />
<g filter="url(#dshadow)">
<rect x="1419.00" y="327.20" width="1095.20" height="937.70" fill="#F0F0F0" rx="9" />
</g>
<path d="M1419 336.2 a9 9 0 0 1 9 -9 h1077.1999999999998 a9 9 0 0 1 9 9 v34.400000000000034 h-1095.1999999999998 z" fill="#EEF2F8" />
<rect x="1419.00" y="327.20" width="1095.20" height="937.70" fill="none" rx="9" stroke="#A0A0A0" stroke-width="1.3" />
<path d="M1428 1264.9 H2505.2" fill="none" stroke="#8C8C8C" stroke-width="1.6" />
<text transform="translate(1429.14,357.00) scale(0.9503,1)" font-size="19.64" fill="#1E1E1E" >Змінення типу діаграми</text>
<text transform="translate(2399.50,356.50) scale(1.0000,1)" font-size="19.64" fill="#1E1E1E" >?</text>
<path d="M2471 342.5 l12 12 M2483 342.5 l-12 12" fill="none" stroke="#222" stroke-width="1.4" />
<rect x="1428.75" y="389.75" width="197.25" height="22.75" fill="#F3F3F3" />
<rect x="1627.50" y="387.75" width="104.50" height="24.75" fill="#F9F9F9" />
<text transform="translate(1431.50,408.50) scale(1.0239,1)" font-size="16.58" fill="#1E1E1E" >Рекомендовані діаграми</text>
<text transform="translate(1632.03,407.50) scale(1.0244,1)" font-size="16.58" fill="#1E1E1E" >Усі діаграми</text>
<rect x="1428.00" y="418.75" width="1075.75" height="788.25" fill="#F9F9F9" />
<rect x="1444.40" y="435.50" width="304.60" height="754.50" fill="#FFFFFF" />
<rect x="1444.25" y="603.75" width="305.00" height="33.25" fill="#C8C8C8" />
<text transform="translate(1489.62,459.50) scale(0.8941,1)" font-size="20.65" fill="#4A4A4A" >Останні</text>
<path d="M1452.5 442.6 V449.6 H1460.9 M1452.5 449.6 L1458.92 443.18 A6.43 6.43 0 0 1 1468.02 452.28 L1459.1 461.2" fill="none" stroke="#444444" stroke-width="1.3" />
<text transform="translate(1488.92,493.25) scale(0.9271,1)" font-size="20.65" fill="#4A4A4A" >Шаблони</text>
<path d="M1451.4 493.7 V478.2 H1470.7 V493.7 Z" fill="#FAFAFA" stroke="#444444" stroke-width="1.3" />
<path d="M1451.4 478.2 V477.2 H1459.7 L1461.2 478.2" fill="none" stroke="#444444" stroke-width="1.3" />
<text transform="translate(1489.60,527.00) scale(0.8698,1)" font-size="20.65" fill="#4A4A4A" >Стовпчаста</text>
<rect x="1455.70" y="511.10" width="5.20" height="16.80" fill="#85BDEA" stroke="#0F6CBD" stroke-width="1.2" />
<rect x="1462.60" y="516.30" width="5.80" height="11.60" fill="#FAFAFA" stroke="#444444" stroke-width="1.2" />
<path d="M1451.6 509.9 V527.9 H1470.7" fill="none" stroke="#444444" stroke-width="1.3" />
<text transform="translate(1490.36,560.75) scale(0.8888,1)" font-size="20.65" fill="#4A4A4A" >Лінійчата</text>
<path d="M1451.6 543.6 V562.4 H1470.7" fill="none" stroke="#444444" stroke-width="1.3" />
<path d="M1451.4 560.4 L1464.9 546.5 L1470.2 552.8" fill="none" stroke="#2B7CD3" stroke-width="1.1" />
<path d="M1451.4 554 L1457.2 547.6 L1464.9 554 L1470.2 547.6" fill="none" stroke="#444444" stroke-width="1.1" />
<circle cx="1457.20" cy="547.60" r="1.20" fill="#444444"/>
<circle cx="1464.90" cy="554.00" r="1.20" fill="#444444"/>
<circle cx="1470.20" cy="547.60" r="1.20" fill="#444444"/>
<circle cx="1464.90" cy="546.50" r="1.20" fill="#2B7CD3"/>
<circle cx="1470.20" cy="552.80" r="1.20" fill="#2B7CD3"/>
<text transform="translate(1489.58,594.50) scale(0.8942,1)" font-size="20.65" fill="#4A4A4A" >Секторна</text>
<circle cx="1460.90" cy="587.10" r="9.20" fill="#FAFAFA" stroke="#444444" stroke-width="1.3"/>
<path d="M1460.9 587.1 V577.9 A9.2 9.2 0 0 1 1467.6 593.4 Z" fill="#C8C8C8" stroke="#444444" stroke-width="1.3" />
<text transform="translate(1489.00,628.25) scale(0.8830,1)" font-size="20.65" fill="#222" >Гістограма</text>
<rect x="1451.60" y="613.30" width="18.00" height="5.80" fill="#85BDEA" stroke="#0F6CBD" stroke-width="1.2" />
<rect x="1451.60" y="621.40" width="13.00" height="4.60" fill="#FAFAFA" stroke="#555" stroke-width="1.2" />
<path d="M1451.6 611 V630.1 H1470.7" fill="none" stroke="#555" stroke-width="1.4" />
<text transform="translate(1489.91,662.00) scale(0.8799,1)" font-size="20.65" fill="#4A4A4A" >З областями</text>
<path d="M1452.2 645 V663.2 H1470.7" fill="none" stroke="#BBBBBB" stroke-width="1" />
<path d="M1452.2 648.1 L1458.6 655.0 L1464.9 648.1 L1470.7 653.9 V660.8 L1464.9 655.0 L1458.6 660.8 L1452.2 658.5 Z" fill="#7DB7EC" stroke="#5AA0E0" stroke-width="0.8" />
<text transform="translate(1490.08,695.75) scale(0.8991,1)" font-size="20.65" fill="#4A4A4A" >Точкова (X Y)</text>
<path d="M1451.6 678.2 V697.4 H1470.7" fill="none" stroke="#444444" stroke-width="1.3" />
<circle cx="1458.60" cy="682.90" r="2.10" fill="#333"/>
<circle cx="1467.30" cy="684.00" r="2.10" fill="#333"/>
<circle cx="1466.10" cy="691.60" r="2.10" fill="#333"/>
<circle cx="1457.40" cy="690.80" r="1.60" fill="none" stroke="#2B7CD3" stroke-width="1"/>
<text transform="translate(1489.01,729.50) scale(0.8769,1)" font-size="20.65" fill="#4A4A4A" >Карта</text>
<path d="M1457.2 714.2 A8 8 0 0 0 1465.5 728.5" fill="none" stroke="#444444" stroke-width="1.2" />
<circle cx="1461.50" cy="721.20" r="6.20" fill="#FFFFFF" stroke="#444444" stroke-width="1.2"/>
<path d="M1457.5 718.5 q2 -3 5 -2 q1 3 -2 4 q-2 2 -3 -2 z M1462.5 722 q3 -1 4 2 q-2 3 -4 1 z M1458.5 723 q2 1 1 4 q-2 -1 -1 -4 z" fill="#2E9A55" />
<path d="M1455.1 731 H1468.4 M1461.8 728.5 V731" fill="none" stroke="#444444" stroke-width="1.2" />
<text transform="translate(1488.93,763.25) scale(0.9206,1)" font-size="20.65" fill="#4A4A4A" >Біржова</text>
<path d="M1451.6 746.1 V765.3 H1470.7" fill="none" stroke="#444444" stroke-width="1.3" />
<rect x="1454.20" y="754.80" width="4.40" height="10.50" fill="#85BDEA" stroke="#0F6CBD" stroke-width="1.1" />
<rect x="1460.30" y="758.90" width="4.30" height="6.40" fill="#FAFAFA" stroke="#444444" stroke-width="1.1" />
<rect x="1466.70" y="753.70" width="4.00" height="11.60" fill="#C8C8C8" stroke="#888" stroke-width="1.1" />
<path d="M1456.4 749.5 V754.8 M1456.4 751 h1.3 M1462.4 752.5 V758.9 M1462.4 754 h1.3 M1468.7 746.8 V753.7 M1468.7 748.6 h1.3" fill="none" stroke="#444444" stroke-width="1" />
<text transform="translate(1489.00,797.00) scale(0.9085,1)" font-size="20.65" fill="#4A4A4A" >Поверхнева</text>
<path d="M1453.3 794.6 L1458.6 783.6 H1470.7 L1467.8 794.6 Z" fill="#FFFFFF" stroke="#444444" stroke-width="1.1" />
<path d="M1453.3 794.6 L1455.9 789.1 H1469.2 L1467.8 794.6 Z" fill="#85BDEA" />
<path d="M1453.3 794.6 L1458.6 783.6 H1470.7 L1467.8 794.6 Z M1455.9 789.1 H1471.3 M1464.4 783.6 L1460.3 794.6 M1458 779.5 V786 M1453 795 L1451.6 798.7" fill="none" stroke="#444444" stroke-width="1.1" />
<text transform="translate(1489.01,830.75) scale(0.9031,1)" font-size="20.65" fill="#4A4A4A" >Пелюсткова</text>
<path d="M1460.60 813.90 L1469.64 820.46 L1466.18 831.09 L1455.02 831.09 L1451.56 820.46 Z" fill="#FFFFFF" stroke="#2B7CD3" stroke-width="1.2" />
<path d="M1460.60 817.90 L1465.83 821.70 L1463.83 827.85 L1457.37 827.85 L1455.37 821.70 Z" fill="#A8D0F2" stroke="#2B7CD3" stroke-width="1" />
<line x1="1460.60" y1="823.40" x2="1460.60" y2="812.60" stroke="#333" stroke-width="1.1" />
<line x1="1460.60" y1="823.40" x2="1470.87" y2="820.06" stroke="#333" stroke-width="1.1" />
<line x1="1460.60" y1="823.40" x2="1466.95" y2="832.14" stroke="#333" stroke-width="1.1" />
<line x1="1460.60" y1="823.40" x2="1454.25" y2="832.14" stroke="#333" stroke-width="1.1" />
<line x1="1460.60" y1="823.40" x2="1450.33" y2="820.06" stroke="#333" stroke-width="1.1" />
<text transform="translate(1490.36,864.50) scale(0.8956,1)" font-size="20.65" fill="#4A4A4A" >Деревовидна карта</text>
<rect x="1451.40" y="847.40" width="19.60" height="19.10" fill="#FAFAFA" stroke="#444444" stroke-width="1.2" />
<rect x="1451.40" y="847.40" width="9.70" height="19.10" fill="#85BDEA" stroke="#0F6CBD" stroke-width="1.3" />
<path d="M1451.4 857 H1461.1" fill="none" stroke="#0F6CBD" stroke-width="1.2" />
<path d="M1461.1 852 H1471 M1465.8 852 V866.5 M1465.8 860.7 H1471" fill="none" stroke="#444444" stroke-width="1.2" />
<text transform="translate(1488.79,898.25) scale(0.8963,1)" font-size="20.65" fill="#4A4A4A" >Ієрархічна секторна діаграма</text>
<circle cx="1461.10" cy="890.30" r="9.30" fill="#FFFFFF" stroke="#444444" stroke-width="1.2"/>
<path d="M1461.1 881 A9.3 9.3 0 0 1 1465.0 898.75 L1462.1 892.5 A2.3 2.3 0 0 0 1461.1 888 Z" fill="#85BDEA" stroke="#0F6CBD" stroke-width="1.1" />
<circle cx="1461.10" cy="890.30" r="5.80" fill="none" stroke="#444444" stroke-width="1.1"/>
<circle cx="1461.10" cy="890.30" r="2.30" fill="#FFFFFF" stroke="#444444" stroke-width="1.1"/>
<path d="M1461.1 881 A9.3 9.3 0 0 1 1465.0 898.75" fill="none" stroke="#0F6CBD" stroke-width="1.3" />
<text transform="translate(1489.00,932.00) scale(0.8830,1)" font-size="20.65" fill="#4A4A4A" >Гістограма</text>
<rect x="1453.90" y="921.10" width="5.80" height="12.20" fill="#85BDEA" stroke="#0F6CBD" stroke-width="1.2" />
<rect x="1459.70" y="916.40" width="4.90" height="16.90" fill="#85BDEA" stroke="#0F6CBD" stroke-width="1.2" />
<rect x="1464.60" y="926.30" width="5.30" height="7.00" fill="#85BDEA" stroke="#0F6CBD" stroke-width="1.2" />
<path d="M1451.6 914.7 V933.3 H1470.7" fill="none" stroke="#444444" stroke-width="1.3" />
<text transform="translate(1488.98,965.75) scale(0.8907,1)" font-size="20.65" fill="#4A4A4A" >Розмах</text>
<path d="M1457 948.7 V967.2 M1455.2 951.2 H1458.8 M1455.2 963.8 H1458.8 M1465.7 949.2 V966.2 M1463.9 951.2 H1467.5 M1463.9 963.6 H1467.5" fill="none" stroke="#444444" stroke-width="1" />
<rect x="1454.10" y="956.00" width="5.80" height="6.80" fill="#85BDEA" stroke="#0F6CBD" stroke-width="1.2" />
<rect x="1462.80" y="952.10" width="5.90" height="6.90" fill="#85BDEA" stroke="#0F6CBD" stroke-width="1.2" />
<text transform="translate(1489.02,999.50) scale(0.8684,1)" font-size="20.65" fill="#4A4A4A" >Каскадна</text>
<path d="M1451.5 982.3 V1001.2 H1470.6" fill="none" stroke="#444444" stroke-width="1.3" />
<path d="M1454.1 1001.2 V987.6 H1458 V993 H1463.3 V983.5 H1469 V1001.2 M1455.8 988 V1001 M1467.5 984 V1001" fill="none" stroke="#555" stroke-width="1.1" />
<path d="M1463.3 983.5 V993" fill="none" stroke="#0F6CBD" stroke-width="1.4" />
<text transform="translate(1490.36,1033.25) scale(0.8917,1)" font-size="20.65" fill="#4A4A4A" >Лійкова діаграма</text>
<rect x="1451.50" y="1017.30" width="19.40" height="5.30" fill="#85BDEA" stroke="#0F6CBD" stroke-width="1.2" />
<rect x="1454.40" y="1022.60" width="14.30" height="4.90" fill="#85BDEA" stroke="#0F6CBD" stroke-width="1.2" />
<rect x="1457.80" y="1027.50" width="7.00" height="5.00" fill="#85BDEA" stroke="#0F6CBD" stroke-width="1.2" />
<text transform="translate(1488.94,1067.00) scale(0.9147,1)" font-size="20.65" fill="#4A4A4A" >Комбінована</text>
<rect x="1454.40" y="1057.60" width="5.00" height="11.20" fill="#85BDEA" stroke="#0F6CBD" stroke-width="1.1" />
<rect x="1459.40" y="1050.80" width="5.40" height="18.00" fill="#FAFAFA" stroke="#444444" stroke-width="1.1" />
<rect x="1464.80" y="1054.70" width="4.80" height="14.10" fill="#C8C8C8" />
<path d="M1451.5 1049.3 V1068.8 H1470.9" fill="none" stroke="#444444" stroke-width="1.3" />
<path d="M1451.7 1066.3 L1459.4 1059.3 L1464.3 1064.4 L1470.9 1058.1" fill="none" stroke="#444444" stroke-width="1.1" />
<line x1="1767.50" y1="437.50" x2="1767.50" y2="1190.00" stroke="#E0E0E0" stroke-width="1.2" />
<rect x="1785.00" y="435.50" width="524.40" height="86.50" fill="#FFFFFF" />
<rect x="1872.30" y="435.50" width="87.40" height="86.60" fill="#DCDCDC" stroke="#ABABAB" stroke-width="1" />
<rect x="1803.30" y="458.60" width="49.20" height="8.10" fill="#85BDEA" stroke="#0063B1" stroke-width="1.4" />
<rect x="1803.30" y="466.70" width="32.20" height="7.40" fill="#FAFAFA" stroke="#333333" stroke-width="1.4" />
<rect x="1803.30" y="481.40" width="24.90" height="7.00" fill="#C8C8C8" stroke="#7F7F7F" stroke-width="1.4" />
<rect x="1803.30" y="488.40" width="37.90" height="8.00" fill="#FAFAFA" stroke="#333333" stroke-width="1.4" />
<path d="M1803.3 452.3 V504.3 H1855.1" fill="none" stroke="#333333" stroke-width="1.6" />
<rect x="1890.60" y="460.40" width="16.80" height="13.70" fill="#FAFAFA" stroke="#333333" stroke-width="1.4" />
<rect x="1907.40" y="460.40" width="17.80" height="13.70" fill="#85BDEA" stroke="#0063B1" stroke-width="1.4" />
<rect x="1890.60" y="483.20" width="24.40" height="13.20" fill="#FAFAFA" stroke="#333333" stroke-width="1.4" />
<rect x="1915.00" y="483.20" width="21.30" height="13.20" fill="#C8C8C8" stroke="#7F7F7F" stroke-width="1.4" />
<path d="M1890.6 452.3 V504.3 H1942.2" fill="none" stroke="#333333" stroke-width="1.6" />
<rect x="1978.00" y="460.40" width="10.60" height="13.70" fill="#FAFAFA" stroke="#333333" stroke-width="1.4" />
<rect x="1988.60" y="460.40" width="35.10" height="13.70" fill="#85BDEA" stroke="#0063B1" stroke-width="1.4" />
<rect x="1978.00" y="483.20" width="27.90" height="13.20" fill="#FAFAFA" stroke="#333333" stroke-width="1.4" />
<rect x="2005.90" y="483.20" width="17.80" height="13.20" fill="#C8C8C8" stroke="#7F7F7F" stroke-width="1.4" />
<path d="M1978 452.3 V504.3 H2029.8" fill="none" stroke="#333333" stroke-width="1.6" />
<path d="M2074.4 451.3 V500.3 L2066.8 505.6 M2074.4 500.5 H2118.6" fill="none" stroke="#333333" stroke-width="1.2" />
<path d="M2064.2 461.6 L2067.7999999999997 463.6 L2095.2 463.6 L2091.6 461.6 Z" fill="#FAFAFA" stroke="#333333" stroke-width="1.1" stroke-linejoin="round"/>
<path d="M2091.6 452.8 L2095.2 454.8 L2095.2 463.6 L2091.6 461.6 Z" fill="#FAFAFA" stroke="#333333" stroke-width="1.1" stroke-linejoin="round"/>
<rect x="2064.20" y="452.80" width="27.40" height="8.80" fill="#FAFAFA" stroke="#333333" stroke-width="1.1" />
<path d="M2064.2 471.1 L2067.7999999999997 473.1 L2108.4 473.1 L2104.8 471.1 Z" fill="#85BDEA" stroke="#333333" stroke-width="1.1" stroke-linejoin="round"/>
<path d="M2104.8 461.6 L2108.4 463.6 L2108.4 473.1 L2104.8 471.1 Z" fill="#85BDEA" stroke="#333333" stroke-width="1.1" stroke-linejoin="round"/>
<rect x="2064.20" y="461.60" width="40.60" height="9.50" fill="#85BDEA" stroke="#333333" stroke-width="1.1" />
<path d="M2064.2 485.3 L2067.7999999999997 487.3 L2103.4 487.3 L2099.8 485.3 Z" fill="#FAFAFA" stroke="#333333" stroke-width="1.1" stroke-linejoin="round"/>
<path d="M2099.8 476.4 L2103.4 478.4 L2103.4 487.3 L2099.8 485.3 Z" fill="#FAFAFA" stroke="#333333" stroke-width="1.1" stroke-linejoin="round"/>
<rect x="2064.20" y="476.40" width="35.60" height="8.90" fill="#FAFAFA" stroke="#333333" stroke-width="1.1" />
<path d="M2064.2 494.9 L2067.7999999999997 496.9 L2097.2999999999997 496.9 L2093.7 494.9 Z" fill="#85BDEA" stroke="#333333" stroke-width="1.1" stroke-linejoin="round"/>
<path d="M2093.7 485.3 L2097.2999999999997 487.3 L2097.2999999999997 496.9 L2093.7 494.9 Z" fill="#85BDEA" stroke="#333333" stroke-width="1.1" stroke-linejoin="round"/>
<rect x="2064.20" y="485.30" width="29.50" height="9.60" fill="#85BDEA" stroke="#333333" stroke-width="1.1" />
<path d="M2161.7 451.3 V498 L2154.1 505.6 M2161.7 498 H2205.8999999999996" fill="none" stroke="#333333" stroke-width="1.2" />
<path d="M2151.6 461.6 L2155.2999999999997 457.90000000000003 L2169.0 457.90000000000003 L2165.3 461.6 Z" fill="#FAFAFA" stroke="#333333" stroke-width="1.1" stroke-linejoin="round"/>
<path d="M2165.3 461.6 L2169.0 457.90000000000003 L2169.0 469.7 L2165.3 473.4 Z" fill="#FAFAFA" stroke="#333333" stroke-width="1.1" stroke-linejoin="round"/>
<rect x="2151.60" y="461.60" width="13.70" height="11.80" fill="#FAFAFA" stroke="#333333" stroke-width="1.1" />
<path d="M2165.3 461.6 L2169.0 457.90000000000003 L2188.2999999999997 457.90000000000003 L2184.6 461.6 Z" fill="#85BDEA" stroke="#0063B1" stroke-width="1.3" stroke-linejoin="round"/>
<path d="M2184.6 461.6 L2188.2999999999997 457.90000000000003 L2188.2999999999997 469.7 L2184.6 473.4 Z" fill="#85BDEA" stroke="#0063B1" stroke-width="1.3" stroke-linejoin="round"/>
<rect x="2165.30" y="461.60" width="19.30" height="11.80" fill="#85BDEA" stroke="#0063B1" stroke-width="1.3" />
<path d="M2151.6 481.7 L2155.2999999999997 478.0 L2178.7999999999997 478.0 L2175.1 481.7 Z" fill="#FAFAFA" stroke="#333333" stroke-width="1.1" stroke-linejoin="round"/>
<path d="M2175.1 481.7 L2178.7999999999997 478.0 L2178.7999999999997 489.7 L2175.1 493.4 Z" fill="#FAFAFA" stroke="#333333" stroke-width="1.1" stroke-linejoin="round"/>
<rect x="2151.60" y="481.70" width="23.50" height="11.70" fill="#FAFAFA" stroke="#333333" stroke-width="1.1" />
<path d="M2175.1 481.7 L2178.7999999999997 478.0 L2198.8999999999996 478.0 L2195.2 481.7 Z" fill="#85BDEA" stroke="#0063B1" stroke-width="1.3" stroke-linejoin="round"/>
<path d="M2195.2 481.7 L2198.8999999999996 478.0 L2198.8999999999996 489.7 L2195.2 493.4 Z" fill="#85BDEA" stroke="#0063B1" stroke-width="1.3" stroke-linejoin="round"/>
<rect x="2175.10" y="481.70" width="20.10" height="11.70" fill="#85BDEA" stroke="#0063B1" stroke-width="1.3" />
<path d="M2249.1 451.3 V498 L2241.5 505.6 M2249.1 498 H2293.2999999999997" fill="none" stroke="#333333" stroke-width="1.2" />
<path d="M2239.4 461.6 L2243.1 457.90000000000003 L2255.2999999999997 457.90000000000003 L2251.6 461.6 Z" fill="#FAFAFA" stroke="#333333" stroke-width="1.1" stroke-linejoin="round"/>
<path d="M2251.6 461.6 L2255.2999999999997 457.90000000000003 L2255.2999999999997 469.7 L2251.6 473.4 Z" fill="#FAFAFA" stroke="#333333" stroke-width="1.1" stroke-linejoin="round"/>
<rect x="2239.40" y="461.60" width="12.20" height="11.80" fill="#FAFAFA" stroke="#333333" stroke-width="1.1" />
<path d="M2251.6 461.6 L2255.2999999999997 457.90000000000003 L2285.7999999999997 457.90000000000003 L2282.1 461.6 Z" fill="#85BDEA" stroke="#0063B1" stroke-width="1.3" stroke-linejoin="round"/>
<path d="M2282.1 461.6 L2285.7999999999997 457.90000000000003 L2285.7999999999997 469.7 L2282.1 473.4 Z" fill="#85BDEA" stroke="#0063B1" stroke-width="1.3" stroke-linejoin="round"/>
<rect x="2251.60" y="461.60" width="30.50" height="11.80" fill="#85BDEA" stroke="#0063B1" stroke-width="1.3" />
<path d="M2239.4 481.7 L2243.1 478.0 L2265.5 478.0 L2261.8 481.7 Z" fill="#FAFAFA" stroke="#333333" stroke-width="1.1" stroke-linejoin="round"/>
<path d="M2261.8 481.7 L2265.5 478.0 L2265.5 489.7 L2261.8 493.4 Z" fill="#FAFAFA" stroke="#333333" stroke-width="1.1" stroke-linejoin="round"/>
<rect x="2239.40" y="481.70" width="22.40" height="11.70" fill="#FAFAFA" stroke="#333333" stroke-width="1.1" />
<path d="M2261.8 481.7 L2265.5 478.0 L2285.7999999999997 478.0 L2282.1 481.7 Z" fill="#85BDEA" stroke="#0063B1" stroke-width="1.3" stroke-linejoin="round"/>
<path d="M2282.1 481.7 L2285.7999999999997 478.0 L2285.7999999999997 489.7 L2282.1 493.4 Z" fill="#85BDEA" stroke="#0063B1" stroke-width="1.3" stroke-linejoin="round"/>
<rect x="2261.80" y="481.70" width="20.30" height="11.70" fill="#85BDEA" stroke="#0063B1" stroke-width="1.3" />
<line x1="1788.00" y1="532.00" x2="2485.00" y2="532.00" stroke="#C8C8C8" stroke-width="1.4" />
<text transform="translate(1783.93,568.30) scale(0.9791,1)" font-size="25.60" fill="#1E1E1E" >Гістограма з накопиченням</text>
<rect x="1785.00" y="583.60" width="703.00" height="608.00" fill="#FFFFFF" />
<rect x="1788.20" y="587.20" width="345.30" height="208.80" fill="none" stroke="#D0D0D0" stroke-width="6" />
<line x1="1791.00" y1="615.50" x2="2131.00" y2="615.50" stroke="#E6E6E6" stroke-width="1" />
<line x1="1791.00" y1="767.30" x2="2131.00" y2="767.30" stroke="#E6E6E6" stroke-width="1" />
<text transform="translate(1943.25,623.50) scale(1.0000,1)" font-size="4.95" fill="#777" >Назва діаграми</text>
<line x1="1797.20" y1="630.20" x2="1797.20" y2="747.40" stroke="#E2E2E2" stroke-width="0.7" />
<text transform="translate(1794.88,754.50) scale(1.0000,1)" font-size="3.20" fill="#888" >-30</text>
<line x1="1827.00" y1="630.20" x2="1827.00" y2="747.40" stroke="#E2E2E2" stroke-width="0.7" />
<text transform="translate(1824.68,754.50) scale(1.0000,1)" font-size="3.20" fill="#888" >-20</text>
<line x1="1856.80" y1="630.20" x2="1856.80" y2="747.40" stroke="#E2E2E2" stroke-width="0.7" />
<text transform="translate(1854.48,754.50) scale(1.0000,1)" font-size="3.20" fill="#888" >-10</text>
<line x1="1886.60" y1="630.20" x2="1886.60" y2="747.40" stroke="#E2E2E2" stroke-width="0.7" />
<text transform="translate(1885.71,754.50) scale(1.0000,1)" font-size="3.20" fill="#888" >0</text>
<line x1="1916.40" y1="630.20" x2="1916.40" y2="747.40" stroke="#E2E2E2" stroke-width="0.7" />
<text transform="translate(1914.56,754.50) scale(1.0000,1)" font-size="3.20" fill="#888" >10</text>
<line x1="1946.20" y1="630.20" x2="1946.20" y2="747.40" stroke="#E2E2E2" stroke-width="0.7" />
<text transform="translate(1944.40,754.50) scale(1.0000,1)" font-size="3.20" fill="#888" >20</text>
<line x1="1976.00" y1="630.20" x2="1976.00" y2="747.40" stroke="#E2E2E2" stroke-width="0.7" />
<text transform="translate(1974.22,754.50) scale(1.0000,1)" font-size="3.20" fill="#888" >30</text>
<line x1="2005.80" y1="630.20" x2="2005.80" y2="747.40" stroke="#E2E2E2" stroke-width="0.7" />
<text transform="translate(2004.05,754.50) scale(1.0000,1)" font-size="3.20" fill="#888" >40</text>
<line x1="2035.60" y1="630.20" x2="2035.60" y2="747.40" stroke="#E2E2E2" stroke-width="0.7" />
<text transform="translate(2033.82,754.50) scale(1.0000,1)" font-size="3.20" fill="#888" >50</text>
<line x1="2065.40" y1="630.20" x2="2065.40" y2="747.40" stroke="#E2E2E2" stroke-width="0.7" />
<text transform="translate(2063.60,754.50) scale(1.0000,1)" font-size="3.20" fill="#888" >60</text>
<line x1="2095.20" y1="630.20" x2="2095.20" y2="747.40" stroke="#E2E2E2" stroke-width="0.7" />
<text transform="translate(2093.40,754.50) scale(1.0000,1)" font-size="3.20" fill="#888" >70</text>
<line x1="2125.00" y1="630.20" x2="2125.00" y2="747.40" stroke="#E2E2E2" stroke-width="0.7" />
<text transform="translate(2123.22,754.50) scale(1.0000,1)" font-size="3.20" fill="#888" >80</text>
<rect x="1873.19" y="741.80" width="13.41" height="3.60" fill="#4472C4" />
<rect x="1857.40" y="741.80" width="15.79" height="3.60" fill="#ED7D31" />
<rect x="1838.92" y="741.80" width="18.48" height="3.60" fill="#A5A5A5" />
<text transform="translate(1870.52,744.90) scale(1.0000,1)" font-size="3.78" font-style="italic" fill="#777" >Січень</text>
<rect x="1875.28" y="731.90" width="11.32" height="3.60" fill="#4472C4" />
<rect x="1866.63" y="731.90" width="8.64" height="3.60" fill="#ED7D31" />
<rect x="1854.42" y="731.90" width="12.22" height="3.60" fill="#A5A5A5" />
<text transform="translate(1869.28,735.00) scale(1.0000,1)" font-size="3.78" font-style="italic" fill="#777" >Лютий</text>
<rect x="1886.60" y="722.00" width="1.79" height="3.60" fill="#4472C4" />
<rect x="1888.39" y="722.00" width="3.87" height="3.60" fill="#ED7D31" />
<rect x="1892.26" y="722.00" width="6.56" height="3.60" fill="#A5A5A5" />
<text transform="translate(1865.61,725.10) scale(1.0000,1)" font-size="3.78" font-style="italic" fill="#777" >Березень</text>
<rect x="1886.60" y="712.10" width="27.42" height="3.60" fill="#4472C4" />
<rect x="1914.02" y="712.10" width="24.73" height="3.60" fill="#ED7D31" />
<rect x="1938.75" y="712.10" width="25.93" height="3.60" fill="#A5A5A5" />
<text transform="translate(1867.86,715.20) scale(1.0000,1)" font-size="3.78" font-style="italic" fill="#777" >Квітень</text>
<rect x="1886.60" y="702.20" width="48.28" height="3.60" fill="#4472C4" />
<rect x="1934.88" y="702.20" width="46.19" height="3.60" fill="#ED7D31" />
<rect x="1981.07" y="702.20" width="48.57" height="3.60" fill="#A5A5A5" />
<text transform="translate(1867.76,705.30) scale(1.0000,1)" font-size="3.78" font-style="italic" fill="#777" >Травень</text>
<rect x="1886.60" y="692.30" width="60.49" height="3.60" fill="#4472C4" />
<rect x="1947.09" y="692.30" width="64.67" height="3.60" fill="#ED7D31" />
<rect x="2011.76" y="692.30" width="61.98" height="3.60" fill="#A5A5A5" />
<text transform="translate(1867.40,695.40) scale(1.0000,1)" font-size="3.78" font-style="italic" fill="#777" >Червень</text>
<rect x="1886.60" y="682.40" width="66.45" height="3.60" fill="#4472C4" />
<rect x="1953.05" y="682.40" width="65.26" height="3.60" fill="#ED7D31" />
<rect x="2018.32" y="682.40" width="65.86" height="3.60" fill="#A5A5A5" />
<text transform="translate(1869.27,685.50) scale(1.0000,1)" font-size="3.78" font-style="italic" fill="#777" >Липень</text>
<rect x="1886.60" y="672.50" width="64.07" height="3.60" fill="#4472C4" />
<rect x="1950.67" y="672.50" width="69.14" height="3.60" fill="#ED7D31" />
<rect x="2019.81" y="672.50" width="65.26" height="3.60" fill="#A5A5A5" />
<text transform="translate(1867.02,675.60) scale(1.0000,1)" font-size="3.78" font-style="italic" fill="#777" >Серпень</text>
<rect x="1886.60" y="662.60" width="49.17" height="3.60" fill="#4472C4" />
<rect x="1935.77" y="662.60" width="45.30" height="3.60" fill="#ED7D31" />
<rect x="1981.07" y="662.60" width="43.51" height="3.60" fill="#A5A5A5" />
<text transform="translate(1865.37,665.70) scale(1.0000,1)" font-size="3.78" font-style="italic" fill="#777" >Вересень</text>
<rect x="1886.60" y="652.70" width="28.61" height="3.60" fill="#4472C4" />
<rect x="1915.21" y="652.70" width="26.82" height="3.60" fill="#ED7D31" />
<rect x="1942.03" y="652.70" width="26.22" height="3.60" fill="#A5A5A5" />
<text transform="translate(1865.40,655.80) scale(1.0000,1)" font-size="3.78" font-style="italic" fill="#777" >Жовтень</text>
<rect x="1886.60" y="642.80" width="6.56" height="3.60" fill="#4472C4" />
<rect x="1893.16" y="642.80" width="4.47" height="3.60" fill="#ED7D31" />
<rect x="1897.63" y="642.80" width="5.36" height="3.60" fill="#A5A5A5" />
<text transform="translate(1864.05,645.90) scale(1.0000,1)" font-size="3.78" font-style="italic" fill="#777" >Листопад</text>
<rect x="1883.02" y="632.90" width="3.58" height="3.60" fill="#4472C4" />
<rect x="1877.06" y="632.90" width="5.96" height="3.60" fill="#ED7D31" />
<rect x="1869.32" y="632.90" width="7.75" height="3.60" fill="#A5A5A5" />
<text transform="translate(1868.20,636.00) scale(1.0000,1)" font-size="3.78" font-style="italic" fill="#777" >Грудень</text>
<rect x="1937.00" y="759.80" width="2.50" height="2.50" fill="#4472C4" />
<text transform="translate(1940.79,762.30) scale(1.2104,1)" font-size="3.49" fill="#888" >2016</text>
<rect x="1955.00" y="759.80" width="2.50" height="2.50" fill="#ED7D31" />
<text transform="translate(1958.79,762.30) scale(1.2147,1)" font-size="3.49" fill="#888" >2017</text>
<rect x="1973.00" y="759.80" width="2.50" height="2.50" fill="#A5A5A5" />
<text transform="translate(1976.79,762.30) scale(1.2104,1)" font-size="3.49" fill="#888" >2018</text>
<rect x="2143.50" y="615.50" width="339.00" height="151.80" fill="#FFFFFF" stroke="#E8E8E8" stroke-width="0.8" />
<text transform="translate(2295.25,623.50) scale(1.0000,1)" font-size="4.95" fill="#777" >Назва діаграми</text>
<line x1="2148.80" y1="630.20" x2="2148.80" y2="747.40" stroke="#E2E2E2" stroke-width="0.7" />
<text transform="translate(2146.48,754.50) scale(1.0000,1)" font-size="3.20" fill="#888" >-60</text>
<line x1="2185.10" y1="630.20" x2="2185.10" y2="747.40" stroke="#E2E2E2" stroke-width="0.7" />
<text transform="translate(2182.78,754.50) scale(1.0000,1)" font-size="3.20" fill="#888" >-40</text>
<line x1="2221.40" y1="630.20" x2="2221.40" y2="747.40" stroke="#E2E2E2" stroke-width="0.7" />
<text transform="translate(2219.08,754.50) scale(1.0000,1)" font-size="3.20" fill="#888" >-20</text>
<line x1="2257.70" y1="630.20" x2="2257.70" y2="747.40" stroke="#E2E2E2" stroke-width="0.7" />
<text transform="translate(2256.81,754.50) scale(1.0000,1)" font-size="3.20" fill="#888" >0</text>
<line x1="2294.00" y1="630.20" x2="2294.00" y2="747.40" stroke="#E2E2E2" stroke-width="0.7" />
<text transform="translate(2292.20,754.50) scale(1.0000,1)" font-size="3.20" fill="#888" >20</text>
<line x1="2330.30" y1="630.20" x2="2330.30" y2="747.40" stroke="#E2E2E2" stroke-width="0.7" />
<text transform="translate(2328.55,754.50) scale(1.0000,1)" font-size="3.20" fill="#888" >40</text>
<line x1="2366.60" y1="630.20" x2="2366.60" y2="747.40" stroke="#E2E2E2" stroke-width="0.7" />
<text transform="translate(2364.80,754.50) scale(1.0000,1)" font-size="3.20" fill="#888" >60</text>
<line x1="2402.90" y1="630.20" x2="2402.90" y2="747.40" stroke="#E2E2E2" stroke-width="0.7" />
<text transform="translate(2401.12,754.50) scale(1.0000,1)" font-size="3.20" fill="#888" >80</text>
<line x1="2439.20" y1="630.20" x2="2439.20" y2="747.40" stroke="#E2E2E2" stroke-width="0.7" />
<text transform="translate(2436.47,754.50) scale(1.0000,1)" font-size="3.20" fill="#888" >100</text>
<line x1="2475.50" y1="630.20" x2="2475.50" y2="747.40" stroke="#E2E2E2" stroke-width="0.7" />
<text transform="translate(2472.77,754.50) scale(1.0000,1)" font-size="3.20" fill="#888" >120</text>
<rect x="2197.15" y="643.20" width="5.86" height="12.60" fill="#43682B" />
<rect x="2203.01" y="643.20" width="7.91" height="12.60" fill="#ED7D31" />
<rect x="2210.92" y="643.20" width="10.25" height="12.60" fill="#4472C4" />
<rect x="2221.18" y="643.20" width="4.39" height="12.60" fill="#A5A5A5" />
<rect x="2225.57" y="643.20" width="16.11" height="12.60" fill="#FFC000" />
<rect x="2241.68" y="643.20" width="29.30" height="12.60" fill="#5B9BD5" />
<rect x="2270.98" y="643.20" width="38.09" height="12.60" fill="#70AD47" />
<rect x="2309.07" y="643.20" width="39.55" height="12.60" fill="#264478" />
<rect x="2348.62" y="643.20" width="40.14" height="12.60" fill="#9E480E" />
<rect x="2388.76" y="643.20" width="25.20" height="12.60" fill="#636363" />
<rect x="2413.95" y="643.20" width="17.58" height="12.60" fill="#997300" />
<rect x="2431.53" y="643.20" width="2.93" height="12.60" fill="#255E91" />
<rect x="2202.72" y="682.70" width="4.39" height="12.60" fill="#43682B" />
<rect x="2207.11" y="682.70" width="5.27" height="12.60" fill="#ED7D31" />
<rect x="2212.39" y="682.70" width="11.13" height="12.60" fill="#4472C4" />
<rect x="2223.52" y="682.70" width="15.23" height="12.60" fill="#FFC000" />
<rect x="2238.75" y="682.70" width="28.42" height="12.60" fill="#5B9BD5" />
<rect x="2267.17" y="682.70" width="39.55" height="12.60" fill="#70AD47" />
<rect x="2306.72" y="682.70" width="39.55" height="12.60" fill="#264478" />
<rect x="2346.28" y="682.70" width="42.48" height="12.60" fill="#9E480E" />
<rect x="2388.76" y="682.70" width="25.20" height="12.60" fill="#636363" />
<rect x="2413.95" y="682.70" width="16.70" height="12.60" fill="#997300" />
<rect x="2430.65" y="682.70" width="3.81" height="12.60" fill="#255E91" />
<rect x="2204.48" y="722.00" width="2.05" height="12.60" fill="#43682B" />
<rect x="2206.53" y="722.00" width="7.32" height="12.60" fill="#ED7D31" />
<rect x="2213.85" y="722.00" width="7.62" height="12.60" fill="#4472C4" />
<rect x="2221.47" y="722.00" width="1.17" height="12.60" fill="#A5A5A5" />
<rect x="2222.64" y="722.00" width="16.99" height="12.60" fill="#FFC000" />
<rect x="2239.63" y="722.00" width="29.30" height="12.60" fill="#5B9BD5" />
<rect x="2268.93" y="722.00" width="37.21" height="12.60" fill="#70AD47" />
<rect x="2306.14" y="722.00" width="40.14" height="12.60" fill="#264478" />
<rect x="2346.28" y="722.00" width="38.97" height="12.60" fill="#9E480E" />
<rect x="2385.24" y="722.00" width="28.42" height="12.60" fill="#636363" />
<rect x="2413.66" y="722.00" width="16.99" height="12.60" fill="#997300" />
<rect x="2430.65" y="722.00" width="5.27" height="12.60" fill="#255E91" />
<rect x="2165.50" y="759.80" width="2.20" height="2.20" fill="#4472C4" />
<line x1="2169.00" y1="761.00" x2="2184.50" y2="761.00" stroke="#AAAAAA" stroke-width="1.1" />
<rect x="2190.30" y="759.80" width="2.20" height="2.20" fill="#ED7D31" />
<line x1="2193.80" y1="761.00" x2="2209.30" y2="761.00" stroke="#AAAAAA" stroke-width="1.1" />
<rect x="2215.10" y="759.80" width="2.20" height="2.20" fill="#A5A5A5" />
<line x1="2218.60" y1="761.00" x2="2234.10" y2="761.00" stroke="#AAAAAA" stroke-width="1.1" />
<rect x="2239.90" y="759.80" width="2.20" height="2.20" fill="#FFC000" />
<line x1="2243.40" y1="761.00" x2="2258.90" y2="761.00" stroke="#AAAAAA" stroke-width="1.1" />
<rect x="2264.70" y="759.80" width="2.20" height="2.20" fill="#5B9BD5" />
<line x1="2268.20" y1="761.00" x2="2283.70" y2="761.00" stroke="#AAAAAA" stroke-width="1.1" />
<rect x="2289.50" y="759.80" width="2.20" height="2.20" fill="#70AD47" />
<line x1="2293.00" y1="761.00" x2="2308.50" y2="761.00" stroke="#AAAAAA" stroke-width="1.1" />
<rect x="2314.30" y="759.80" width="2.20" height="2.20" fill="#264478" />
<line x1="2317.80" y1="761.00" x2="2333.30" y2="761.00" stroke="#AAAAAA" stroke-width="1.1" />
<rect x="2339.10" y="759.80" width="2.20" height="2.20" fill="#9E480E" />
<line x1="2342.60" y1="761.00" x2="2358.10" y2="761.00" stroke="#AAAAAA" stroke-width="1.1" />
<rect x="2363.90" y="759.80" width="2.20" height="2.20" fill="#636363" />
<line x1="2367.40" y1="761.00" x2="2382.90" y2="761.00" stroke="#AAAAAA" stroke-width="1.1" />
<rect x="2388.70" y="759.80" width="2.20" height="2.20" fill="#997300" />
<line x1="2392.20" y1="761.00" x2="2407.70" y2="761.00" stroke="#AAAAAA" stroke-width="1.1" />
<rect x="2413.50" y="759.80" width="2.20" height="2.20" fill="#255E91" />
<line x1="2417.00" y1="761.00" x2="2432.50" y2="761.00" stroke="#AAAAAA" stroke-width="1.1" />
<rect x="2438.30" y="759.80" width="2.20" height="2.20" fill="#43682B" />
<line x1="2441.80" y1="761.00" x2="2457.30" y2="761.00" stroke="#AAAAAA" stroke-width="1.1" />
<rect x="2508.10" y="1250.10" width="1.80" height="1.80" fill="#B8B8B8" />
<rect x="2508.10" y="1254.10" width="1.80" height="1.80" fill="#B8B8B8" />
<rect x="2504.10" y="1254.10" width="1.80" height="1.80" fill="#B8B8B8" />
<rect x="2508.10" y="1258.10" width="1.80" height="1.80" fill="#B8B8B8" />
<rect x="2504.10" y="1258.10" width="1.80" height="1.80" fill="#B8B8B8" />
<rect x="2500.10" y="1258.10" width="1.80" height="1.80" fill="#B8B8B8" />
<rect x="2275.60" y="1215.00" width="106.90" height="39.00" fill="#F7FAFD" rx="3" stroke="#5BA0E0" stroke-width="1.4" />
<text transform="translate(2317.97,1243.00) scale(0.7832,1)" font-size="19.64" fill="#1E1E1E" >OK</text>
<rect x="2398.40" y="1215.60" width="106.00" height="38.40" fill="#FCFCFC" rx="3" stroke="#DCDCDC" stroke-width="1.2" />
<text transform="translate(2412.17,1243.00) scale(0.8470,1)" font-size="19.64" fill="#1E1E1E" >Скасувати</text>
</svg></body></html>
